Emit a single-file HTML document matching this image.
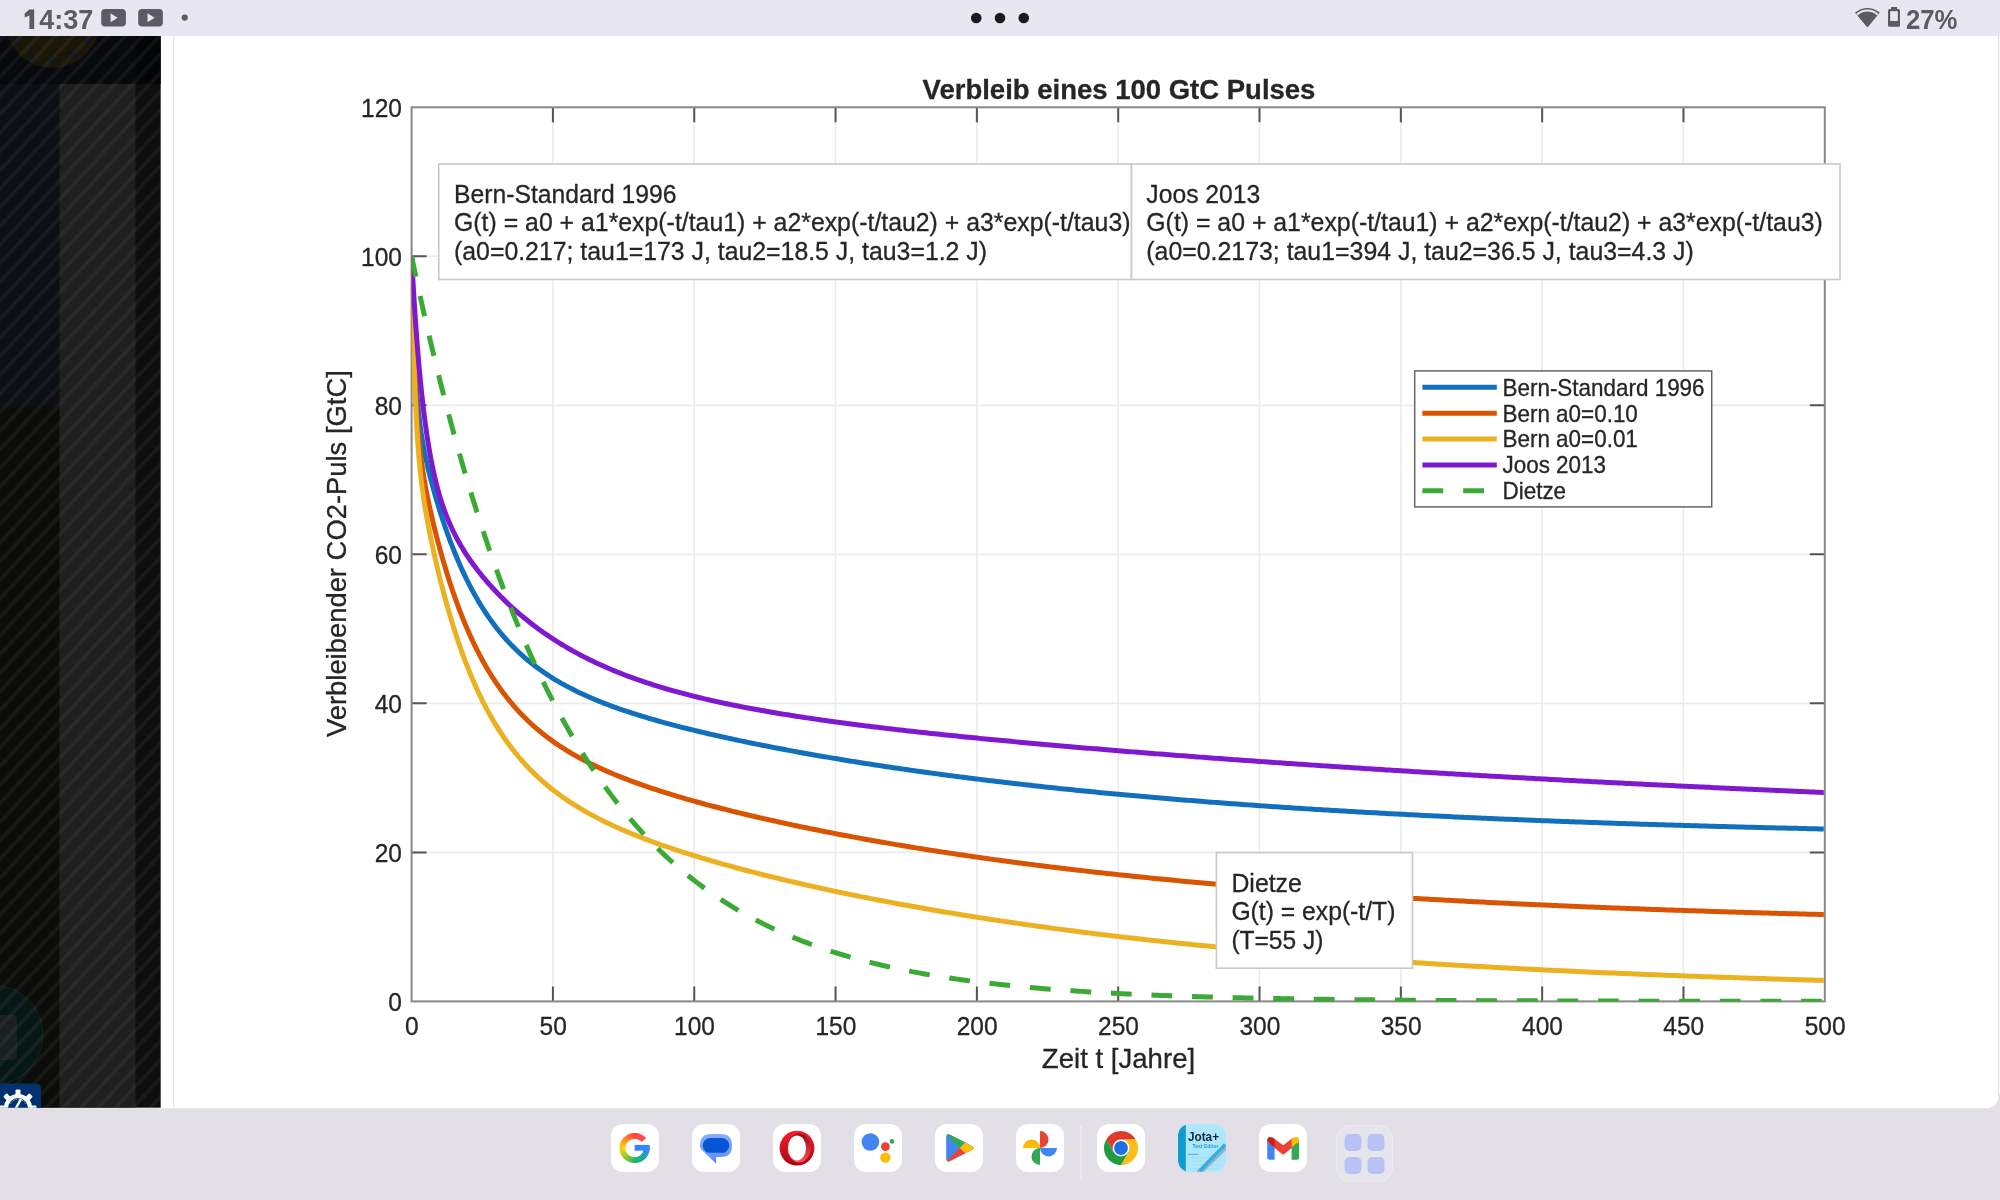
<!DOCTYPE html>
<html><head><meta charset="utf-8"><style>
html,body{margin:0;padding:0;width:2000px;height:1200px;overflow:hidden;background:#fff}
svg{display:block;font-family:"Liberation Sans", sans-serif;will-change:transform}
</style></head><body>
<svg width="2000" height="1200" viewBox="0 0 2000 1200">
<rect x="0" y="0" width="2000" height="1200" fill="#ffffff"/>
<rect x="0" y="0" width="2000" height="36" fill="#e8e6f0"/>
<rect x="0" y="1108.2" width="2000" height="91.8" fill="#e2e0e6"/>
<path d="M1985,1108.2 Q1998.6,1108.2 1998.6,1094.6 H2000 V1108.2Z" fill="#e2e0e6"/>
<rect x="1998" y="36" width="1.2" height="1060" fill="#e0e0e0"/>
<rect x="173" y="36" width="1" height="1071.7" fill="#e4e4e4"/>
<defs><pattern id="stripes" patternUnits="userSpaceOnUse" width="12.7" height="12.7" patternTransform="rotate(43)"><rect x="0" y="0" width="3.6" height="12.7" fill="#ffffff" fill-opacity="0.05"/></pattern></defs>
<rect x="0" y="36" width="160.7" height="1071.7" fill="#0e0e0e"/>
<rect x="0" y="84" width="59.5" height="322" fill="#0c1014"/>
<rect x="0" y="406" width="59.5" height="701.5" fill="#0c0c08"/>
<rect x="59.5" y="84" width="76" height="1023.5" fill="#1f1f1f"/>
<rect x="0" y="36" width="135.5" height="48" fill="#07090d"/>
<rect x="135.5" y="36" width="25.2" height="48" fill="#040506"/>
<clipPath id="lp"><rect x="0" y="36" width="160.7" height="1071.7"/></clipPath>
<g clip-path="url(#lp)">
<circle cx="52.5" cy="20.3" r="47.5" fill="#1a1709"/>
<polygon points="15.70,34.70 17.06,38.33 20.93,38.50 17.90,40.91 18.93,44.65 15.70,42.51 12.47,44.65 13.50,40.91 10.47,38.50 14.34,38.33" fill="#0d1220"/>
<polygon points="31.00,49.20 32.36,52.83 36.23,53.00 33.20,55.41 34.23,59.15 31.00,57.01 27.77,59.15 28.80,55.41 25.77,53.00 29.64,52.83" fill="#0d1220"/>
<polygon points="51.90,54.70 53.26,58.33 57.13,58.50 54.10,60.91 55.13,64.65 51.90,62.51 48.67,64.65 49.70,60.91 46.67,58.50 50.54,58.33" fill="#0d1220"/>
<polygon points="72.70,49.20 74.06,52.83 77.93,53.00 74.90,55.41 75.93,59.15 72.70,57.01 69.47,59.15 70.50,55.41 67.47,53.00 71.34,52.83" fill="#0d1220"/>
<polygon points="88.00,34.70 89.36,38.33 93.23,38.50 90.20,40.91 91.23,44.65 88.00,42.51 84.77,44.65 85.80,40.91 82.77,38.50 86.64,38.33" fill="#0d1220"/>
<circle cx="-7" cy="1035" r="50" fill="#061816" stroke="#1a2220" stroke-width="1"/>
<rect x="-10" y="1015" width="27" height="45" rx="4" fill="#1a1f1f"/>
<rect x="0" y="36" width="160.7" height="1071.7" fill="url(#stripes)"/>
<rect x="-10" y="1083.5" width="51" height="40" rx="5" fill="#003270"/>
<rect x="15.5" y="1089.5" width="5" height="6" rx="1" fill="#fff" transform="rotate(0 18 1108)"/><rect x="15.5" y="1089.5" width="5" height="6" rx="1" fill="#fff" transform="rotate(45 18 1108)"/><rect x="15.5" y="1089.5" width="5" height="6" rx="1" fill="#fff" transform="rotate(90 18 1108)"/><rect x="15.5" y="1089.5" width="5" height="6" rx="1" fill="#fff" transform="rotate(135 18 1108)"/><rect x="15.5" y="1089.5" width="5" height="6" rx="1" fill="#fff" transform="rotate(180 18 1108)"/><rect x="15.5" y="1089.5" width="5" height="6" rx="1" fill="#fff" transform="rotate(225 18 1108)"/><rect x="15.5" y="1089.5" width="5" height="6" rx="1" fill="#fff" transform="rotate(270 18 1108)"/><rect x="15.5" y="1089.5" width="5" height="6" rx="1" fill="#fff" transform="rotate(315 18 1108)"/>
<circle cx="18" cy="1108" r="14" fill="#fff"/>
<circle cx="18" cy="1108" r="10" fill="#003270"/>
<path d="M10,1104 A9,9 0 0 1 26,1104" stroke="#fff" stroke-width="0.8" fill="none" stroke-dasharray="1 1"/>
<path d="M16,1108 L21,1099" stroke="#fff" stroke-width="2.5"/>
</g>
<path d="M29.4,9.5 H34.2 V29 H29.4 V15.6 L24.7,17.6 V13.2 Z" fill="#5c5b63"/><text x="39.2" y="29" font-size="27.5" font-weight="bold" fill="#5c5b63" textLength="54.2" lengthAdjust="spacingAndGlyphs">4:37</text>
<rect x="101.2" y="9" width="24.7" height="17.6" rx="4" fill="#5c5b63"/>
<path d="M110.55,13.3L117.55,17.8L110.55,22.3Z" fill="#e8e6f0"/>
<rect x="138.2" y="9" width="24.7" height="17.6" rx="4" fill="#5c5b63"/>
<path d="M147.54999999999998,13.3L154.54999999999998,17.8L147.54999999999998,22.3Z" fill="#e8e6f0"/>
<circle cx="184.7" cy="17.6" r="3.1" fill="#5c5b63"/>
<circle cx="976.25" cy="18" r="5.3" fill="#1a1a1a"/>
<circle cx="1000" cy="18" r="5.3" fill="#1a1a1a"/>
<circle cx="1023.75" cy="18" r="5.3" fill="#1a1a1a"/>
<path d="M1867.4,27.0 L1855.57,12.65 A18.6,18.6 0 0 1 1879.23,12.65 Z" fill="#5c5b63" stroke="#5c5b63" stroke-width="1" stroke-linejoin="round"/>
<path d="M1856.24,13.69 A16.6,16.6 0 0 1 1878.56,13.69 L1877.16,15.39 A14.4,14.4 0 0 0 1857.64,15.39 Z" fill="#e8e6f0"/>
<rect x="1891" y="7" width="6" height="2.5" fill="#5c5b63"/>
<rect x="1888" y="9" width="12" height="17.8" rx="1.5" fill="#5c5b63"/>
<rect x="1890.2" y="11.2" width="7.6" height="9.8" fill="#e8e6f0"/>
<text x="1906" y="28.8" font-size="27" font-weight="bold" fill="#5c5b63" textLength="51.5" lengthAdjust="spacingAndGlyphs">27%</text>
<path d="M552.92,107.30V1001.40 M694.24,107.30V1001.40 M835.56,107.30V1001.40 M976.88,107.30V1001.40 M1118.20,107.30V1001.40 M1259.52,107.30V1001.40 M1400.84,107.30V1001.40 M1542.16,107.30V1001.40 M1683.48,107.30V1001.40 M411.60,852.38H1824.80 M411.60,703.37H1824.80 M411.60,554.35H1824.80 M411.60,405.33H1824.80 M411.60,256.32H1824.80" stroke="#ebebeb" stroke-width="1.6" fill="none"/>
<path d="M552.92,1001.40v-15 M552.92,107.30v15 M694.24,1001.40v-15 M694.24,107.30v15 M835.56,1001.40v-15 M835.56,107.30v15 M976.88,1001.40v-15 M976.88,107.30v15 M1118.20,1001.40v-15 M1118.20,107.30v15 M1259.52,1001.40v-15 M1259.52,107.30v15 M1400.84,1001.40v-15 M1400.84,107.30v15 M1542.16,1001.40v-15 M1542.16,107.30v15 M1683.48,1001.40v-15 M1683.48,107.30v15 M411.60,852.38h15 M1824.80,852.38h-15 M411.60,703.37h15 M1824.80,703.37h-15 M411.60,554.35h15 M1824.80,554.35h-15 M411.60,405.33h15 M1824.80,405.33h-15 M411.60,256.32h15 M1824.80,256.32h-15" stroke="#555" stroke-width="2" fill="none"/>
<rect x="411.6" y="107.3" width="1413.20" height="894.10" fill="none" stroke="#888" stroke-width="2"/>
<clipPath id="pc"><rect x="411.6" y="107.3" width="1412.20" height="894.10"/></clipPath>
<g clip-path="url(#pc)" fill="none" stroke-width="5" stroke-linejoin="round">
<path d="M411.60,256.32 L411.74,262.77 L411.88,268.99 L412.02,274.98 L412.17,280.75 L412.31,286.31 L412.45,291.67 L412.59,296.84 L412.73,301.82 L412.87,306.62 L413.01,311.26 L413.15,315.73 L413.30,320.04 L413.44,324.20 L413.58,328.22 L413.72,332.10 L413.86,335.85 L414.00,339.47 L414.14,342.97 L414.29,346.35 L414.43,349.62 L414.57,352.78 L414.71,355.84 L414.85,358.80 L414.99,361.66 L415.13,364.43 L415.27,367.12 L415.42,369.72 L415.56,372.24 L415.70,374.68 L415.84,377.05 L415.98,379.35 L416.12,381.57 L416.26,383.74 L416.40,385.84 L416.55,387.88 L416.83,391.78 L417.11,395.48 L417.39,398.97 L417.68,402.29 L417.96,405.43 L418.24,408.43 L418.52,411.28 L418.81,414.00 L419.09,416.59 L419.37,419.08 L419.66,421.46 L419.94,423.75 L420.22,425.95 L420.50,428.06 L420.79,430.10 L421.21,433.04 L421.63,435.83 L422.06,438.49 L422.48,441.05 L422.91,443.51 L423.33,445.87 L423.75,448.16 L424.18,450.37 L424.60,452.52 L425.03,454.61 L425.45,456.64 L425.87,458.63 L426.44,461.21 L427.00,463.72 L427.57,466.17 L428.13,468.56 L428.70,470.91 L429.27,473.21 L429.83,475.46 L430.40,477.68 L430.96,479.87 L431.53,482.02 L432.09,484.14 L432.66,486.23 L433.22,488.29 L433.79,490.33 L434.35,492.34 L434.92,494.33 L435.48,496.30 L436.05,498.24 L436.61,500.16 L437.32,502.54 L438.03,504.88 L438.73,507.19 L439.44,509.48 L441.28,515.28 L442.69,519.62 L444.10,523.85 L445.52,527.98 L446.93,532.01 L448.34,535.95 L449.76,539.79 L451.17,543.54 L452.58,547.21 L454.00,550.79 L455.41,554.28 L456.82,557.70 L458.24,561.03 L459.65,564.29 L461.06,567.47 L462.48,570.59 L463.89,573.63 L465.30,576.60 L466.71,579.50 L468.13,582.34 L469.54,585.11 L470.95,587.83 L472.37,590.48 L473.78,593.07 L475.19,595.61 L476.61,598.09 L478.02,600.51 L479.43,602.88 L480.85,605.20 L482.26,607.47 L483.67,609.69 L485.09,611.87 L486.50,614.00 L487.91,616.08 L489.33,618.11 L490.74,620.11 L492.15,622.06 L493.57,623.97 L494.98,625.85 L496.39,627.68 L497.81,629.47 L499.22,631.23 L500.63,632.96 L502.04,634.64 L503.46,636.30 L504.87,637.92 L506.28,639.51 L507.70,641.07 L509.11,642.59 L510.52,644.09 L511.94,645.56 L513.35,647.00 L516.18,649.80 L519.00,652.49 L521.83,655.08 L524.66,657.58 L527.48,659.99 L530.31,662.32 L533.14,664.56 L535.96,666.72 L538.79,668.82 L541.61,670.84 L544.44,672.79 L547.27,674.69 L550.09,676.52 L552.92,678.30 L555.75,680.02 L558.57,681.69 L561.40,683.31 L564.23,684.89 L567.05,686.42 L569.88,687.91 L572.70,689.35 L575.53,690.76 L578.36,692.14 L581.18,693.47 L584.01,694.78 L586.84,696.05 L589.66,697.29 L592.49,698.51 L595.32,699.69 L598.14,700.85 L600.97,701.99 L603.80,703.10 L606.62,704.18 L609.45,705.25 L612.27,706.29 L615.10,707.32 L617.93,708.32 L620.75,709.31 L623.58,710.28 L626.41,711.23 L629.23,712.16 L632.06,713.08 L634.89,713.99 L637.71,714.88 L640.54,715.76 L643.36,716.62 L646.19,717.47 L649.02,718.31 L651.84,719.13 L654.67,719.95 L657.50,720.75 L660.32,721.55 L663.15,722.33 L665.98,723.10 L668.80,723.87 L671.63,724.62 L674.46,725.37 L677.28,726.10 L680.11,726.83 L682.93,727.55 L685.76,728.26 L688.59,728.97 L691.41,729.67 L694.24,730.36 L697.07,731.04 L699.89,731.72 L702.72,732.39 L705.55,733.05 L708.37,733.71 L711.20,734.36 L714.02,735.01 L716.85,735.65 L719.68,736.28 L722.50,736.91 L725.33,737.54 L728.16,738.16 L730.98,738.77 L733.81,739.38 L736.64,739.98 L739.46,740.58 L742.29,741.17 L745.12,741.76 L747.94,742.35 L750.77,742.93 L753.59,743.51 L756.42,744.08 L759.25,744.65 L762.07,745.21 L764.90,745.77 L767.73,746.32 L770.55,746.88 L773.38,747.42 L776.21,747.97 L779.03,748.51 L781.86,749.04 L784.68,749.58 L787.51,750.11 L790.34,750.63 L793.16,751.15 L795.99,751.67 L798.82,752.19 L801.64,752.70 L804.47,753.21 L807.30,753.71 L810.12,754.22 L812.95,754.72 L815.78,755.21 L818.60,755.70 L821.43,756.19 L824.25,756.68 L827.08,757.16 L829.91,757.64 L832.73,758.12 L835.56,758.59 L838.39,759.07 L841.21,759.53 L844.04,760.00 L846.87,760.46 L849.69,760.92 L852.52,761.38 L855.34,761.83 L858.17,762.29 L861.00,762.73 L863.82,763.18 L866.65,763.62 L869.48,764.07 L872.30,764.50 L875.13,764.94 L877.96,765.37 L880.78,765.80 L883.61,766.23 L886.44,766.66 L889.26,767.08 L892.09,767.50 L894.91,767.92 L897.74,768.33 L900.57,768.74 L903.39,769.15 L906.22,769.56 L909.05,769.97 L911.87,770.37 L914.70,770.77 L917.53,771.17 L920.35,771.57 L923.18,771.96 L926.00,772.35 L928.83,772.74 L931.66,773.13 L934.48,773.51 L937.31,773.89 L940.14,774.27 L942.96,774.65 L945.79,775.03 L948.62,775.40 L951.44,775.77 L954.27,776.14 L957.10,776.51 L959.92,776.87 L962.75,777.24 L965.57,777.60 L968.40,777.96 L971.23,778.31 L974.05,778.67 L976.88,779.02 L979.71,779.37 L982.53,779.72 L985.36,780.06 L988.19,780.41 L991.01,780.75 L993.84,781.09 L996.66,781.43 L999.49,781.76 L1002.32,782.10 L1005.14,782.43 L1007.97,782.76 L1010.80,783.09 L1013.62,783.42 L1016.45,783.74 L1019.28,784.07 L1022.10,784.39 L1024.93,784.71 L1027.76,785.02 L1030.58,785.34 L1033.41,785.65 L1036.23,785.96 L1039.06,786.27 L1041.89,786.58 L1044.71,786.89 L1047.54,787.19 L1050.37,787.50 L1053.19,787.80 L1056.02,788.10 L1058.85,788.39 L1061.67,788.69 L1064.50,788.98 L1067.32,789.28 L1070.15,789.57 L1072.98,789.86 L1075.80,790.15 L1078.63,790.43 L1081.46,790.72 L1084.28,791.00 L1087.11,791.28 L1089.94,791.56 L1092.76,791.84 L1095.59,792.11 L1098.42,792.39 L1101.24,792.66 L1104.07,792.93 L1106.89,793.20 L1109.72,793.47 L1112.55,793.74 L1115.37,794.00 L1118.20,794.27 L1121.03,794.53 L1123.85,794.79 L1126.68,795.05 L1129.51,795.30 L1132.33,795.56 L1135.16,795.82 L1137.98,796.07 L1140.81,796.32 L1143.64,796.57 L1146.46,796.82 L1149.29,797.07 L1152.12,797.31 L1154.94,797.56 L1157.77,797.80 L1160.60,798.04 L1163.42,798.28 L1166.25,798.52 L1169.08,798.76 L1171.90,799.00 L1174.73,799.23 L1177.55,799.46 L1180.38,799.70 L1183.21,799.93 L1186.03,800.16 L1188.86,800.38 L1191.69,800.61 L1194.51,800.84 L1197.34,801.06 L1200.17,801.28 L1202.99,801.51 L1205.82,801.73 L1208.64,801.94 L1211.47,802.16 L1214.30,802.38 L1217.12,802.59 L1219.95,802.81 L1222.78,803.02 L1225.60,803.23 L1228.43,803.44 L1231.26,803.65 L1234.08,803.86 L1236.91,804.07 L1239.74,804.27 L1242.56,804.48 L1245.39,804.68 L1248.21,804.88 L1251.04,805.08 L1253.87,805.28 L1256.69,805.48 L1259.52,805.68 L1262.35,805.88 L1265.17,806.07 L1268.00,806.26 L1270.83,806.46 L1273.65,806.65 L1276.48,806.84 L1279.30,807.03 L1282.13,807.22 L1284.96,807.41 L1287.78,807.59 L1290.61,807.78 L1293.44,807.96 L1296.26,808.14 L1299.09,808.33 L1301.92,808.51 L1304.74,808.69 L1307.57,808.87 L1310.40,809.04 L1313.22,809.22 L1316.05,809.40 L1318.87,809.57 L1321.70,809.75 L1324.53,809.92 L1327.35,810.09 L1330.18,810.26 L1333.01,810.43 L1335.83,810.60 L1338.66,810.77 L1341.49,810.94 L1344.31,811.10 L1347.14,811.27 L1349.96,811.43 L1352.79,811.59 L1355.62,811.76 L1358.44,811.92 L1361.27,812.08 L1364.10,812.24 L1366.92,812.40 L1369.75,812.55 L1372.58,812.71 L1375.40,812.87 L1378.23,813.02 L1381.06,813.17 L1383.88,813.33 L1386.71,813.48 L1389.53,813.63 L1392.36,813.78 L1395.19,813.93 L1398.01,814.08 L1400.84,814.23 L1403.67,814.37 L1406.49,814.52 L1409.32,814.67 L1412.15,814.81 L1414.97,814.95 L1417.80,815.10 L1420.62,815.24 L1423.45,815.38 L1426.28,815.52 L1429.10,815.66 L1431.93,815.80 L1434.76,815.94 L1437.58,816.07 L1440.41,816.21 L1443.24,816.35 L1446.06,816.48 L1448.89,816.61 L1451.72,816.75 L1454.54,816.88 L1457.37,817.01 L1460.19,817.14 L1463.02,817.27 L1465.85,817.40 L1468.67,817.53 L1471.50,817.66 L1474.33,817.79 L1477.15,817.91 L1479.98,818.04 L1482.81,818.16 L1485.63,818.29 L1488.46,818.41 L1491.28,818.53 L1494.11,818.66 L1496.94,818.78 L1499.76,818.90 L1502.59,819.02 L1505.42,819.14 L1508.24,819.26 L1511.07,819.37 L1513.90,819.49 L1516.72,819.61 L1519.55,819.72 L1522.38,819.84 L1525.20,819.95 L1528.03,820.07 L1530.85,820.18 L1533.68,820.29 L1536.51,820.41 L1539.33,820.52 L1542.16,820.63 L1544.99,820.74 L1547.81,820.85 L1550.64,820.96 L1553.47,821.06 L1556.29,821.17 L1559.12,821.28 L1561.94,821.39 L1564.77,821.49 L1567.60,821.60 L1570.42,821.70 L1573.25,821.80 L1576.08,821.91 L1578.90,822.01 L1581.73,822.11 L1584.56,822.21 L1587.38,822.32 L1590.21,822.42 L1593.04,822.52 L1595.86,822.61 L1598.69,822.71 L1601.51,822.81 L1604.34,822.91 L1607.17,823.01 L1609.99,823.10 L1612.82,823.20 L1615.65,823.29 L1618.47,823.39 L1621.30,823.48 L1624.13,823.58 L1626.95,823.67 L1629.78,823.76 L1632.60,823.85 L1635.43,823.94 L1638.26,824.04 L1641.08,824.13 L1643.91,824.22 L1646.74,824.31 L1649.56,824.39 L1652.39,824.48 L1655.22,824.57 L1658.04,824.66 L1660.87,824.74 L1663.70,824.83 L1666.52,824.92 L1669.35,825.00 L1672.17,825.09 L1675.00,825.17 L1677.83,825.26 L1680.65,825.34 L1683.48,825.42 L1686.31,825.50 L1689.13,825.59 L1691.96,825.67 L1694.79,825.75 L1697.61,825.83 L1700.44,825.91 L1703.26,825.99 L1706.09,826.07 L1708.92,826.15 L1711.74,826.23 L1714.57,826.30 L1717.40,826.38 L1720.22,826.46 L1723.05,826.53 L1725.88,826.61 L1728.70,826.69 L1731.53,826.76 L1734.36,826.84 L1737.18,826.91 L1740.01,826.98 L1742.83,827.06 L1745.66,827.13 L1748.49,827.20 L1751.31,827.27 L1754.14,827.35 L1756.97,827.42 L1759.79,827.49 L1762.62,827.56 L1765.45,827.63 L1768.27,827.70 L1771.10,827.77 L1773.92,827.84 L1776.75,827.91 L1779.58,827.97 L1782.40,828.04 L1785.23,828.11 L1788.06,828.18 L1790.88,828.24 L1793.71,828.31 L1796.54,828.37 L1799.36,828.44 L1802.19,828.50 L1805.02,828.57 L1807.84,828.63 L1810.67,828.70 L1813.49,828.76 L1816.32,828.82 L1819.15,828.89 L1821.97,828.95 L1824.80,829.01" stroke="#1170bd"/>
<path d="M411.60,256.32 L411.74,263.74 L411.88,270.89 L412.02,277.77 L412.17,284.40 L412.31,290.80 L412.45,296.96 L412.59,302.89 L412.73,308.62 L412.87,314.14 L413.01,319.47 L413.15,324.61 L413.30,329.56 L413.44,334.35 L413.58,338.97 L413.72,343.43 L413.86,347.74 L414.00,351.90 L414.14,355.92 L414.29,359.80 L414.43,363.56 L414.57,367.20 L414.71,370.71 L414.85,374.11 L414.99,377.40 L415.13,380.59 L415.27,383.67 L415.42,386.66 L415.56,389.56 L415.70,392.37 L415.84,395.09 L415.98,397.73 L416.12,400.29 L416.26,402.78 L416.40,405.19 L416.55,407.53 L416.69,409.81 L416.83,412.03 L416.97,414.18 L417.11,416.27 L417.25,418.31 L417.54,422.22 L417.82,425.93 L418.10,429.46 L418.38,432.81 L418.67,436.01 L418.95,439.07 L419.23,441.99 L419.51,444.78 L419.80,447.47 L420.08,450.04 L420.36,452.52 L420.64,454.91 L420.93,457.21 L421.21,459.44 L421.49,461.60 L421.78,463.69 L422.06,465.72 L422.48,468.65 L422.91,471.48 L423.33,474.20 L423.75,476.82 L424.18,479.37 L424.60,481.83 L425.03,484.24 L425.45,486.58 L425.87,488.86 L426.30,491.09 L426.72,493.28 L427.15,495.42 L427.57,497.53 L427.99,499.60 L428.42,501.63 L428.84,503.64 L429.27,505.62 L429.83,508.21 L430.40,510.76 L430.96,513.27 L431.53,515.74 L432.09,518.18 L432.66,520.58 L433.22,522.95 L433.79,525.29 L434.35,527.61 L434.92,529.89 L435.48,532.16 L436.05,534.39 L436.61,536.60 L437.18,538.79 L437.74,540.95 L438.31,543.09 L438.87,545.21 L439.44,547.31 L441.28,553.98 L442.69,558.96 L444.10,563.82 L445.52,568.57 L446.93,573.21 L448.34,577.73 L449.76,582.15 L451.17,586.46 L452.58,590.67 L454.00,594.79 L455.41,598.80 L456.82,602.73 L458.24,606.56 L459.65,610.31 L461.06,613.97 L462.48,617.55 L463.89,621.04 L465.30,624.46 L466.71,627.79 L468.13,631.06 L469.54,634.24 L470.95,637.36 L472.37,640.41 L473.78,643.39 L475.19,646.30 L476.61,649.16 L478.02,651.94 L479.43,654.67 L480.85,657.34 L482.26,659.95 L483.67,662.50 L485.09,665.00 L486.50,667.44 L487.91,669.83 L489.33,672.18 L490.74,674.47 L492.15,676.71 L493.57,678.91 L494.98,681.06 L496.39,683.17 L497.81,685.23 L499.22,687.26 L500.63,689.24 L502.04,691.18 L503.46,693.08 L504.87,694.94 L506.28,696.77 L507.70,698.56 L509.11,700.31 L510.52,702.04 L511.94,703.72 L513.35,705.38 L514.76,707.00 L516.18,708.59 L517.59,710.16 L519.00,711.69 L520.42,713.19 L521.83,714.67 L523.24,716.12 L524.66,717.54 L527.48,720.31 L530.31,722.98 L533.14,725.56 L535.96,728.05 L538.79,730.45 L541.61,732.78 L544.44,735.03 L547.27,737.20 L550.09,739.31 L552.92,741.35 L555.75,743.33 L558.57,745.25 L561.40,747.12 L564.23,748.93 L567.05,750.69 L569.88,752.40 L572.70,754.06 L575.53,755.68 L578.36,757.26 L581.18,758.80 L584.01,760.30 L586.84,761.76 L589.66,763.19 L592.49,764.58 L595.32,765.95 L598.14,767.28 L600.97,768.58 L603.80,769.86 L606.62,771.11 L609.45,772.33 L612.27,773.53 L615.10,774.71 L617.93,775.86 L620.75,777.00 L623.58,778.11 L626.41,779.20 L629.23,780.28 L632.06,781.34 L634.89,782.38 L637.71,783.40 L640.54,784.41 L643.36,785.40 L646.19,786.38 L649.02,787.34 L651.84,788.29 L654.67,789.23 L657.50,790.15 L660.32,791.06 L663.15,791.96 L665.98,792.85 L668.80,793.73 L671.63,794.60 L674.46,795.45 L677.28,796.30 L680.11,797.14 L682.93,797.97 L685.76,798.79 L688.59,799.60 L691.41,800.40 L694.24,801.19 L697.07,801.98 L699.89,802.76 L702.72,803.53 L705.55,804.29 L708.37,805.05 L711.20,805.80 L714.02,806.54 L716.85,807.27 L719.68,808.00 L722.50,808.73 L725.33,809.44 L728.16,810.16 L730.98,810.86 L733.81,811.56 L736.64,812.25 L739.46,812.94 L742.29,813.62 L745.12,814.30 L747.94,814.97 L750.77,815.64 L753.59,816.30 L756.42,816.96 L759.25,817.61 L762.07,818.26 L764.90,818.91 L767.73,819.54 L770.55,820.18 L773.38,820.81 L776.21,821.43 L779.03,822.05 L781.86,822.67 L784.68,823.28 L787.51,823.89 L790.34,824.50 L793.16,825.10 L795.99,825.69 L798.82,826.28 L801.64,826.87 L804.47,827.46 L807.30,828.04 L810.12,828.62 L812.95,829.19 L815.78,829.76 L818.60,830.32 L821.43,830.89 L824.25,831.45 L827.08,832.00 L829.91,832.55 L832.73,833.10 L835.56,833.65 L838.39,834.19 L841.21,834.73 L844.04,835.26 L846.87,835.80 L849.69,836.32 L852.52,836.85 L855.34,837.37 L858.17,837.89 L861.00,838.41 L863.82,838.92 L866.65,839.43 L869.48,839.94 L872.30,840.44 L875.13,840.94 L877.96,841.44 L880.78,841.93 L883.61,842.42 L886.44,842.91 L889.26,843.40 L892.09,843.88 L894.91,844.36 L897.74,844.84 L900.57,845.31 L903.39,845.79 L906.22,846.25 L909.05,846.72 L911.87,847.18 L914.70,847.64 L917.53,848.10 L920.35,848.56 L923.18,849.01 L926.00,849.46 L928.83,849.91 L931.66,850.35 L934.48,850.79 L937.31,851.23 L940.14,851.67 L942.96,852.10 L945.79,852.54 L948.62,852.97 L951.44,853.39 L954.27,853.82 L957.10,854.24 L959.92,854.66 L962.75,855.07 L965.57,855.49 L968.40,855.90 L971.23,856.31 L974.05,856.72 L976.88,857.12 L979.71,857.53 L982.53,857.93 L985.36,858.32 L988.19,858.72 L991.01,859.11 L993.84,859.50 L996.66,859.89 L999.49,860.28 L1002.32,860.66 L1005.14,861.05 L1007.97,861.43 L1010.80,861.80 L1013.62,862.18 L1016.45,862.55 L1019.28,862.92 L1022.10,863.29 L1024.93,863.66 L1027.76,864.02 L1030.58,864.39 L1033.41,864.75 L1036.23,865.11 L1039.06,865.46 L1041.89,865.82 L1044.71,866.17 L1047.54,866.52 L1050.37,866.87 L1053.19,867.21 L1056.02,867.56 L1058.85,867.90 L1061.67,868.24 L1064.50,868.58 L1067.32,868.92 L1070.15,869.25 L1072.98,869.58 L1075.80,869.91 L1078.63,870.24 L1081.46,870.57 L1084.28,870.89 L1087.11,871.22 L1089.94,871.54 L1092.76,871.86 L1095.59,872.17 L1098.42,872.49 L1101.24,872.80 L1104.07,873.12 L1106.89,873.43 L1109.72,873.73 L1112.55,874.04 L1115.37,874.35 L1118.20,874.65 L1121.03,874.95 L1123.85,875.25 L1126.68,875.55 L1129.51,875.84 L1132.33,876.14 L1135.16,876.43 L1137.98,876.72 L1140.81,877.01 L1143.64,877.30 L1146.46,877.58 L1149.29,877.87 L1152.12,878.15 L1154.94,878.43 L1157.77,878.71 L1160.60,878.99 L1163.42,879.27 L1166.25,879.54 L1169.08,879.81 L1171.90,880.09 L1174.73,880.36 L1177.55,880.62 L1180.38,880.89 L1183.21,881.16 L1186.03,881.42 L1188.86,881.68 L1191.69,881.94 L1194.51,882.20 L1197.34,882.46 L1200.17,882.72 L1202.99,882.97 L1205.82,883.22 L1208.64,883.48 L1211.47,883.73 L1214.30,883.97 L1217.12,884.22 L1219.95,884.47 L1222.78,884.71 L1225.60,884.96 L1228.43,885.20 L1231.26,885.44 L1234.08,885.68 L1236.91,885.92 L1239.74,886.15 L1242.56,886.39 L1245.39,886.62 L1248.21,886.85 L1251.04,887.08 L1253.87,887.31 L1256.69,887.54 L1259.52,887.77 L1262.35,887.99 L1265.17,888.22 L1268.00,888.44 L1270.83,888.66 L1273.65,888.88 L1276.48,889.10 L1279.30,889.32 L1282.13,889.54 L1284.96,889.75 L1287.78,889.97 L1290.61,890.18 L1293.44,890.39 L1296.26,890.60 L1299.09,890.81 L1301.92,891.02 L1304.74,891.23 L1307.57,891.43 L1310.40,891.64 L1313.22,891.84 L1316.05,892.04 L1318.87,892.24 L1321.70,892.44 L1324.53,892.64 L1327.35,892.84 L1330.18,893.04 L1333.01,893.23 L1335.83,893.42 L1338.66,893.62 L1341.49,893.81 L1344.31,894.00 L1347.14,894.19 L1349.96,894.38 L1352.79,894.57 L1355.62,894.75 L1358.44,894.94 L1361.27,895.12 L1364.10,895.31 L1366.92,895.49 L1369.75,895.67 L1372.58,895.85 L1375.40,896.03 L1378.23,896.21 L1381.06,896.38 L1383.88,896.56 L1386.71,896.73 L1389.53,896.91 L1392.36,897.08 L1395.19,897.25 L1398.01,897.42 L1400.84,897.59 L1403.67,897.76 L1406.49,897.93 L1409.32,898.10 L1412.15,898.26 L1414.97,898.43 L1417.80,898.59 L1420.62,898.76 L1423.45,898.92 L1426.28,899.08 L1429.10,899.24 L1431.93,899.40 L1434.76,899.56 L1437.58,899.72 L1440.41,899.87 L1443.24,900.03 L1446.06,900.18 L1448.89,900.34 L1451.72,900.49 L1454.54,900.64 L1457.37,900.79 L1460.19,900.94 L1463.02,901.09 L1465.85,901.24 L1468.67,901.39 L1471.50,901.54 L1474.33,901.68 L1477.15,901.83 L1479.98,901.97 L1482.81,902.12 L1485.63,902.26 L1488.46,902.40 L1491.28,902.54 L1494.11,902.68 L1496.94,902.82 L1499.76,902.96 L1502.59,903.10 L1505.42,903.24 L1508.24,903.37 L1511.07,903.51 L1513.90,903.64 L1516.72,903.78 L1519.55,903.91 L1522.38,904.04 L1525.20,904.18 L1528.03,904.31 L1530.85,904.44 L1533.68,904.57 L1536.51,904.70 L1539.33,904.82 L1542.16,904.95 L1544.99,905.08 L1547.81,905.20 L1550.64,905.33 L1553.47,905.45 L1556.29,905.58 L1559.12,905.70 L1561.94,905.82 L1564.77,905.94 L1567.60,906.06 L1570.42,906.18 L1573.25,906.30 L1576.08,906.42 L1578.90,906.54 L1581.73,906.66 L1584.56,906.77 L1587.38,906.89 L1590.21,907.01 L1593.04,907.12 L1595.86,907.23 L1598.69,907.35 L1601.51,907.46 L1604.34,907.57 L1607.17,907.68 L1609.99,907.79 L1612.82,907.90 L1615.65,908.01 L1618.47,908.12 L1621.30,908.23 L1624.13,908.34 L1626.95,908.45 L1629.78,908.55 L1632.60,908.66 L1635.43,908.76 L1638.26,908.87 L1641.08,908.97 L1643.91,909.07 L1646.74,909.18 L1649.56,909.28 L1652.39,909.38 L1655.22,909.48 L1658.04,909.58 L1660.87,909.68 L1663.70,909.78 L1666.52,909.88 L1669.35,909.98 L1672.17,910.08 L1675.00,910.17 L1677.83,910.27 L1680.65,910.37 L1683.48,910.46 L1686.31,910.56 L1689.13,910.65 L1691.96,910.74 L1694.79,910.84 L1697.61,910.93 L1700.44,911.02 L1703.26,911.11 L1706.09,911.20 L1708.92,911.29 L1711.74,911.38 L1714.57,911.47 L1717.40,911.56 L1720.22,911.65 L1723.05,911.74 L1725.88,911.83 L1728.70,911.91 L1731.53,912.00 L1734.36,912.09 L1737.18,912.17 L1740.01,912.26 L1742.83,912.34 L1745.66,912.42 L1748.49,912.51 L1751.31,912.59 L1754.14,912.67 L1756.97,912.75 L1759.79,912.84 L1762.62,912.92 L1765.45,913.00 L1768.27,913.08 L1771.10,913.16 L1773.92,913.24 L1776.75,913.32 L1779.58,913.39 L1782.40,913.47 L1785.23,913.55 L1788.06,913.63 L1790.88,913.70 L1793.71,913.78 L1796.54,913.85 L1799.36,913.93 L1802.19,914.00 L1805.02,914.08 L1807.84,914.15 L1810.67,914.23 L1813.49,914.30 L1816.32,914.37 L1819.15,914.44 L1821.97,914.52 L1824.80,914.59" stroke="#d95300"/>
<path d="M411.60,256.32 L411.74,264.48 L411.88,272.34 L412.02,279.92 L412.17,287.21 L412.31,294.24 L412.45,301.02 L412.59,307.55 L412.73,313.85 L412.87,319.92 L413.01,325.78 L413.15,331.43 L413.30,336.89 L413.44,342.15 L413.58,347.23 L413.72,352.14 L413.86,356.88 L414.00,361.46 L414.14,365.88 L414.29,370.15 L414.43,374.29 L414.57,378.28 L414.71,382.15 L414.85,385.89 L414.99,389.51 L415.13,393.02 L415.27,396.41 L415.42,399.70 L415.56,402.88 L415.70,405.97 L415.84,408.97 L415.98,411.87 L416.12,414.69 L416.26,417.42 L416.40,420.08 L416.55,422.66 L416.69,425.16 L416.83,427.60 L416.97,429.96 L417.11,432.27 L417.25,434.51 L417.39,436.69 L417.54,438.81 L417.68,440.88 L417.82,442.89 L418.10,446.77 L418.38,450.46 L418.67,453.98 L418.95,457.34 L419.23,460.55 L419.51,463.63 L419.80,466.58 L420.08,469.41 L420.36,472.14 L420.64,474.77 L420.93,477.30 L421.21,479.75 L421.49,482.13 L421.78,484.43 L422.06,486.66 L422.34,488.83 L422.62,490.94 L422.91,492.99 L423.19,495.00 L423.61,497.92 L424.04,500.75 L424.46,503.49 L424.88,506.16 L425.31,508.75 L425.73,511.28 L426.16,513.76 L426.58,516.18 L427.00,518.55 L427.43,520.88 L427.85,523.17 L428.28,525.42 L428.70,527.64 L429.12,529.82 L429.55,531.98 L429.97,534.10 L430.40,536.20 L430.82,538.28 L431.24,540.33 L431.67,542.36 L432.09,544.36 L432.52,546.35 L432.94,548.32 L433.50,550.91 L434.07,553.47 L434.64,556.00 L435.20,558.50 L435.77,560.97 L436.33,563.42 L436.90,565.83 L437.46,568.23 L438.03,570.59 L438.59,572.94 L439.16,575.25 L439.72,577.55 L441.28,583.74 L442.69,589.22 L444.10,594.58 L445.52,599.80 L446.93,604.90 L448.34,609.87 L449.76,614.73 L451.17,619.47 L452.58,624.11 L454.00,628.63 L455.41,633.05 L456.82,637.37 L458.24,641.59 L459.65,645.71 L461.06,649.73 L462.48,653.67 L463.89,657.51 L465.30,661.27 L466.71,664.94 L468.13,668.53 L469.54,672.04 L470.95,675.47 L472.37,678.82 L473.78,682.10 L475.19,685.30 L476.61,688.44 L478.02,691.51 L479.43,694.50 L480.85,697.44 L482.26,700.31 L483.67,703.12 L485.09,705.86 L486.50,708.55 L487.91,711.19 L489.33,713.76 L490.74,716.28 L492.15,718.75 L493.57,721.17 L494.98,723.54 L496.39,725.85 L497.81,728.13 L499.22,730.35 L500.63,732.53 L502.04,734.66 L503.46,736.75 L504.87,738.80 L506.28,740.81 L507.70,742.78 L509.11,744.71 L510.52,746.61 L511.94,748.46 L513.35,750.28 L514.76,752.07 L516.18,753.82 L517.59,755.54 L519.00,757.23 L520.42,758.88 L521.83,760.51 L523.24,762.10 L524.66,763.66 L526.07,765.20 L527.48,766.71 L528.90,768.19 L530.31,769.65 L531.72,771.08 L534.55,773.86 L537.37,776.56 L540.20,779.16 L543.03,781.67 L545.85,784.10 L548.68,786.46 L551.51,788.74 L554.33,790.95 L557.16,793.10 L559.99,795.18 L562.81,797.20 L565.64,799.16 L568.47,801.07 L571.29,802.93 L574.12,804.73 L576.94,806.49 L579.77,808.20 L582.60,809.88 L585.42,811.50 L588.25,813.09 L591.08,814.65 L593.90,816.16 L596.73,817.65 L599.56,819.10 L602.38,820.51 L605.21,821.90 L608.03,823.26 L610.86,824.60 L613.69,825.90 L616.51,827.19 L619.34,828.45 L622.17,829.68 L624.99,830.89 L627.82,832.09 L630.65,833.26 L633.47,834.41 L636.30,835.55 L639.13,836.66 L641.95,837.76 L644.78,838.85 L647.60,839.91 L650.43,840.97 L653.26,842.00 L656.08,843.03 L658.91,844.04 L661.74,845.03 L664.56,846.02 L667.39,846.99 L670.22,847.95 L673.04,848.90 L675.87,849.83 L678.69,850.76 L681.52,851.68 L684.35,852.58 L687.17,853.48 L690.00,854.37 L692.83,855.24 L695.65,856.11 L698.48,856.97 L701.31,857.83 L704.13,858.67 L706.96,859.51 L709.79,860.33 L712.61,861.15 L715.44,861.97 L718.26,862.77 L721.09,863.57 L723.92,864.36 L726.74,865.15 L729.57,865.93 L732.40,866.70 L735.22,867.47 L738.05,868.23 L740.88,868.98 L743.70,869.73 L746.53,870.47 L749.35,871.21 L752.18,871.94 L755.01,872.67 L757.83,873.39 L760.66,874.10 L763.49,874.81 L766.31,875.52 L769.14,876.22 L771.97,876.91 L774.79,877.60 L777.62,878.29 L780.45,878.97 L783.27,879.64 L786.10,880.31 L788.92,880.98 L791.75,881.64 L794.58,882.30 L797.40,882.96 L800.23,883.61 L803.06,884.25 L805.88,884.89 L808.71,885.53 L811.54,886.16 L814.36,886.79 L817.19,887.41 L820.01,888.04 L822.84,888.65 L825.67,889.27 L828.49,889.87 L831.32,890.48 L834.15,891.08 L836.97,891.68 L839.80,892.27 L842.63,892.86 L845.45,893.45 L848.28,894.03 L851.11,894.61 L853.93,895.19 L856.76,895.76 L859.58,896.33 L862.41,896.90 L865.24,897.46 L868.06,898.02 L870.89,898.58 L873.72,899.13 L876.54,899.68 L879.37,900.22 L882.20,900.76 L885.02,901.30 L887.85,901.84 L890.67,902.37 L893.50,902.90 L896.33,903.43 L899.15,903.95 L901.98,904.47 L904.81,904.99 L907.63,905.50 L910.46,906.02 L913.29,906.52 L916.11,907.03 L918.94,907.53 L921.77,908.03 L924.59,908.53 L927.42,909.02 L930.24,909.51 L933.07,910.00 L935.90,910.48 L938.72,910.97 L941.55,911.44 L944.38,911.92 L947.20,912.39 L950.03,912.87 L952.86,913.33 L955.68,913.80 L958.51,914.26 L961.33,914.72 L964.16,915.18 L966.99,915.63 L969.81,916.09 L972.64,916.54 L975.47,916.98 L978.29,917.43 L981.12,917.87 L983.95,918.31 L986.77,918.74 L989.60,919.18 L992.43,919.61 L995.25,920.04 L998.08,920.46 L1000.90,920.89 L1003.73,921.31 L1006.56,921.73 L1009.38,922.15 L1012.21,922.56 L1015.04,922.97 L1017.86,923.38 L1020.69,923.79 L1023.52,924.19 L1026.34,924.60 L1029.17,925.00 L1031.99,925.39 L1034.82,925.79 L1037.65,926.18 L1040.47,926.57 L1043.30,926.96 L1046.13,927.35 L1048.95,927.73 L1051.78,928.11 L1054.61,928.49 L1057.43,928.87 L1060.26,929.25 L1063.09,929.62 L1065.91,929.99 L1068.74,930.36 L1071.56,930.73 L1074.39,931.09 L1077.22,931.45 L1080.04,931.81 L1082.87,932.17 L1085.70,932.53 L1088.52,932.88 L1091.35,933.24 L1094.18,933.59 L1097.00,933.93 L1099.83,934.28 L1102.65,934.62 L1105.48,934.97 L1108.31,935.31 L1111.13,935.64 L1113.96,935.98 L1116.79,936.31 L1119.61,936.65 L1122.44,936.98 L1125.27,937.31 L1128.09,937.63 L1130.92,937.96 L1133.75,938.28 L1136.57,938.60 L1139.40,938.92 L1142.22,939.24 L1145.05,939.55 L1147.88,939.87 L1150.70,940.18 L1153.53,940.49 L1156.36,940.80 L1159.18,941.10 L1162.01,941.41 L1164.84,941.71 L1167.66,942.01 L1170.49,942.31 L1173.31,942.61 L1176.14,942.91 L1178.97,943.20 L1181.79,943.49 L1184.62,943.78 L1187.45,944.07 L1190.27,944.36 L1193.10,944.65 L1195.93,944.93 L1198.75,945.21 L1201.58,945.50 L1204.41,945.78 L1207.23,946.05 L1210.06,946.33 L1212.88,946.60 L1215.71,946.88 L1218.54,947.15 L1221.36,947.42 L1224.19,947.69 L1227.02,947.95 L1229.84,948.22 L1232.67,948.48 L1235.50,948.74 L1238.32,949.01 L1241.15,949.26 L1243.97,949.52 L1246.80,949.78 L1249.63,950.03 L1252.45,950.29 L1255.28,950.54 L1258.11,950.79 L1260.93,951.04 L1263.76,951.29 L1266.59,951.53 L1269.41,951.78 L1272.24,952.02 L1275.07,952.26 L1277.89,952.50 L1280.72,952.74 L1283.54,952.98 L1286.37,953.21 L1289.20,953.45 L1292.02,953.68 L1294.85,953.91 L1297.68,954.15 L1300.50,954.38 L1303.33,954.60 L1306.16,954.83 L1308.98,955.06 L1311.81,955.28 L1314.63,955.50 L1317.46,955.72 L1320.29,955.95 L1323.11,956.16 L1325.94,956.38 L1328.77,956.60 L1331.59,956.81 L1334.42,957.03 L1337.25,957.24 L1340.07,957.45 L1342.90,957.66 L1345.73,957.87 L1348.55,958.08 L1351.38,958.29 L1354.20,958.49 L1357.03,958.70 L1359.86,958.90 L1362.68,959.10 L1365.51,959.30 L1368.34,959.50 L1371.16,959.70 L1373.99,959.90 L1376.82,960.10 L1379.64,960.29 L1382.47,960.49 L1385.29,960.68 L1388.12,960.87 L1390.95,961.06 L1393.77,961.25 L1396.60,961.44 L1399.43,961.63 L1402.25,961.81 L1405.08,962.00 L1407.91,962.18 L1410.73,962.37 L1413.56,962.55 L1416.39,962.73 L1419.21,962.91 L1422.04,963.09 L1424.86,963.27 L1427.69,963.44 L1430.52,963.62 L1433.34,963.79 L1436.17,963.97 L1439.00,964.14 L1441.82,964.31 L1444.65,964.48 L1447.48,964.65 L1450.30,964.82 L1453.13,964.99 L1455.95,965.16 L1458.78,965.32 L1461.61,965.49 L1464.43,965.65 L1467.26,965.82 L1470.09,965.98 L1472.91,966.14 L1475.74,966.30 L1478.57,966.46 L1481.39,966.62 L1484.22,966.78 L1487.05,966.93 L1489.87,967.09 L1492.70,967.24 L1495.52,967.40 L1498.35,967.55 L1501.18,967.70 L1504.00,967.85 L1506.83,968.00 L1509.66,968.15 L1512.48,968.30 L1515.31,968.45 L1518.14,968.60 L1520.96,968.74 L1523.79,968.89 L1526.61,969.03 L1529.44,969.18 L1532.27,969.32 L1535.09,969.46 L1537.92,969.60 L1540.75,969.74 L1543.57,969.88 L1546.40,970.02 L1549.23,970.16 L1552.05,970.30 L1554.88,970.43 L1557.71,970.57 L1560.53,970.70 L1563.36,970.84 L1566.18,970.97 L1569.01,971.10 L1571.84,971.24 L1574.66,971.37 L1577.49,971.50 L1580.32,971.63 L1583.14,971.76 L1585.97,971.88 L1588.80,972.01 L1591.62,972.14 L1594.45,972.26 L1597.27,972.39 L1600.10,972.51 L1602.93,972.64 L1605.75,972.76 L1608.58,972.88 L1611.41,973.00 L1614.23,973.12 L1617.06,973.24 L1619.89,973.36 L1622.71,973.48 L1625.54,973.60 L1628.37,973.72 L1631.19,973.83 L1634.02,973.95 L1636.84,974.07 L1639.67,974.18 L1642.50,974.29 L1645.32,974.41 L1648.15,974.52 L1650.98,974.63 L1653.80,974.74 L1656.63,974.85 L1659.46,974.96 L1662.28,975.07 L1665.11,975.18 L1667.93,975.29 L1670.76,975.40 L1673.59,975.51 L1676.41,975.61 L1679.24,975.72 L1682.07,975.82 L1684.89,975.93 L1687.72,976.03 L1690.55,976.13 L1693.37,976.24 L1696.20,976.34 L1699.03,976.44 L1701.85,976.54 L1704.68,976.64 L1707.50,976.74 L1710.33,976.84 L1713.16,976.94 L1715.98,977.04 L1718.81,977.14 L1721.64,977.23 L1724.46,977.33 L1727.29,977.42 L1730.12,977.52 L1732.94,977.61 L1735.77,977.71 L1738.59,977.80 L1741.42,977.90 L1744.25,977.99 L1747.07,978.08 L1749.90,978.17 L1752.73,978.26 L1755.55,978.35 L1758.38,978.44 L1761.21,978.53 L1764.03,978.62 L1766.86,978.71 L1769.69,978.80 L1772.51,978.89 L1775.34,978.97 L1778.16,979.06 L1780.99,979.14 L1783.82,979.23 L1786.64,979.31 L1789.47,979.40 L1792.30,979.48 L1795.12,979.57 L1797.95,979.65 L1800.78,979.73 L1803.60,979.81 L1806.43,979.90 L1809.25,979.98 L1812.08,980.06 L1814.91,980.14 L1817.73,980.22 L1820.56,980.30 L1823.39,980.37 L1824.80,980.41" stroke="#ecb120"/>
<path d="M411.60,256.32 L411.74,259.00 L411.88,261.66 L412.02,264.29 L412.17,266.90 L412.31,269.47 L412.45,272.02 L412.59,274.55 L412.73,277.05 L412.87,279.52 L413.01,281.97 L413.15,284.39 L413.30,286.79 L413.44,289.16 L413.58,291.51 L413.72,293.83 L413.86,296.13 L414.00,298.41 L414.14,300.66 L414.29,302.89 L414.43,305.10 L414.57,307.29 L414.71,309.45 L414.85,311.59 L414.99,313.71 L415.13,315.81 L415.27,317.89 L415.42,319.95 L415.56,321.98 L415.70,324.00 L415.84,325.99 L416.12,329.92 L416.40,333.78 L416.69,337.55 L416.97,341.25 L417.25,344.88 L417.54,348.44 L417.82,351.93 L418.10,355.35 L418.38,358.70 L418.67,361.99 L418.95,365.21 L419.23,368.37 L419.51,371.47 L419.80,374.51 L420.08,377.50 L420.36,380.42 L420.64,383.30 L420.93,386.11 L421.21,388.88 L421.49,391.59 L421.78,394.25 L422.06,396.86 L422.34,399.42 L422.62,401.94 L422.91,404.41 L423.19,406.83 L423.47,409.21 L423.75,411.55 L424.04,413.84 L424.32,416.09 L424.60,418.31 L424.88,420.48 L425.17,422.61 L425.45,424.71 L425.73,426.77 L426.01,428.79 L426.30,430.78 L426.72,433.70 L427.15,436.54 L427.57,439.31 L427.99,442.00 L428.42,444.63 L428.84,447.20 L429.27,449.70 L429.69,452.14 L430.11,454.52 L430.54,456.84 L430.96,459.11 L431.38,461.32 L431.81,463.48 L432.23,465.59 L432.66,467.65 L433.08,469.67 L433.50,471.64 L434.07,474.19 L434.64,476.67 L435.20,479.08 L435.77,481.42 L436.33,483.70 L436.90,485.91 L437.46,488.06 L438.03,490.15 L438.59,492.19 L439.16,494.17 L439.72,496.10 L441.28,501.17 L442.69,505.49 L444.10,509.56 L445.52,513.42 L446.93,517.07 L448.34,520.54 L449.76,523.85 L451.17,527.01 L452.58,530.04 L454.00,532.94 L455.41,535.74 L456.82,538.43 L458.24,541.02 L459.65,543.54 L461.06,545.97 L462.48,548.33 L463.89,550.62 L465.30,552.86 L466.71,555.03 L468.13,557.15 L469.54,559.22 L470.95,561.25 L472.37,563.23 L473.78,565.17 L475.19,567.07 L476.61,568.94 L478.02,570.77 L479.43,572.57 L480.85,574.34 L482.26,576.07 L483.67,577.78 L485.09,579.47 L486.50,581.12 L487.91,582.75 L489.33,584.36 L490.74,585.94 L492.15,587.50 L493.57,589.04 L494.98,590.55 L496.39,592.05 L497.81,593.52 L499.22,594.98 L500.63,596.42 L502.04,597.83 L504.87,600.61 L507.70,603.33 L510.52,605.97 L513.35,608.55 L516.18,611.06 L519.00,613.52 L521.83,615.92 L524.66,618.26 L527.48,620.55 L530.31,622.78 L533.14,624.96 L535.96,627.09 L538.79,629.18 L541.61,631.21 L544.44,633.20 L547.27,635.15 L550.09,637.05 L552.92,638.91 L555.75,640.73 L558.57,642.51 L561.40,644.25 L564.23,645.95 L567.05,647.61 L569.88,649.24 L572.70,650.84 L575.53,652.39 L578.36,653.92 L581.18,655.42 L584.01,656.88 L586.84,658.31 L589.66,659.71 L592.49,661.09 L595.32,662.43 L598.14,663.75 L600.97,665.04 L603.80,666.30 L606.62,667.54 L609.45,668.76 L612.27,669.95 L615.10,671.11 L617.93,672.26 L620.75,673.38 L623.58,674.48 L626.41,675.56 L629.23,676.62 L632.06,677.65 L634.89,678.67 L637.71,679.67 L640.54,680.65 L643.36,681.62 L646.19,682.56 L649.02,683.49 L651.84,684.40 L654.67,685.30 L657.50,686.18 L660.32,687.04 L663.15,687.89 L665.98,688.73 L668.80,689.55 L671.63,690.35 L674.46,691.14 L677.28,691.92 L680.11,692.69 L682.93,693.45 L685.76,694.19 L688.59,694.92 L691.41,695.64 L694.24,696.34 L697.07,697.04 L699.89,697.72 L702.72,698.40 L705.55,699.06 L708.37,699.72 L711.20,700.36 L714.02,701.00 L716.85,701.62 L719.68,702.24 L722.50,702.85 L725.33,703.45 L728.16,704.04 L730.98,704.62 L733.81,705.20 L736.64,705.77 L739.46,706.32 L742.29,706.88 L745.12,707.42 L747.94,707.96 L750.77,708.49 L753.59,709.02 L756.42,709.53 L759.25,710.05 L762.07,710.55 L764.90,711.05 L767.73,711.54 L770.55,712.03 L773.38,712.51 L776.21,712.99 L779.03,713.46 L781.86,713.93 L784.68,714.39 L787.51,714.84 L790.34,715.30 L793.16,715.74 L795.99,716.18 L798.82,716.62 L801.64,717.05 L804.47,717.48 L807.30,717.90 L810.12,718.32 L812.95,718.74 L815.78,719.15 L818.60,719.56 L821.43,719.96 L824.25,720.36 L827.08,720.76 L829.91,721.15 L832.73,721.54 L835.56,721.93 L838.39,722.31 L841.21,722.69 L844.04,723.06 L846.87,723.44 L849.69,723.81 L852.52,724.17 L855.34,724.54 L858.17,724.90 L861.00,725.26 L863.82,725.61 L866.65,725.97 L869.48,726.32 L872.30,726.66 L875.13,727.01 L877.96,727.35 L880.78,727.69 L883.61,728.03 L886.44,728.37 L889.26,728.70 L892.09,729.03 L894.91,729.36 L897.74,729.69 L900.57,730.01 L903.39,730.33 L906.22,730.65 L909.05,730.97 L911.87,731.29 L914.70,731.60 L917.53,731.91 L920.35,732.23 L923.18,732.53 L926.00,732.84 L928.83,733.15 L931.66,733.45 L934.48,733.75 L937.31,734.05 L940.14,734.35 L942.96,734.65 L945.79,734.94 L948.62,735.24 L951.44,735.53 L954.27,735.82 L957.10,736.11 L959.92,736.40 L962.75,736.69 L965.57,736.97 L968.40,737.25 L971.23,737.54 L974.05,737.82 L976.88,738.10 L979.71,738.38 L982.53,738.65 L985.36,738.93 L988.19,739.20 L991.01,739.48 L993.84,739.75 L996.66,740.02 L999.49,740.29 L1002.32,740.56 L1005.14,740.83 L1007.97,741.09 L1010.80,741.36 L1013.62,741.62 L1016.45,741.88 L1019.28,742.15 L1022.10,742.41 L1024.93,742.67 L1027.76,742.92 L1030.58,743.18 L1033.41,743.44 L1036.23,743.70 L1039.06,743.95 L1041.89,744.20 L1044.71,744.46 L1047.54,744.71 L1050.37,744.96 L1053.19,745.21 L1056.02,745.46 L1058.85,745.71 L1061.67,745.95 L1064.50,746.20 L1067.32,746.45 L1070.15,746.69 L1072.98,746.93 L1075.80,747.18 L1078.63,747.42 L1081.46,747.66 L1084.28,747.90 L1087.11,748.14 L1089.94,748.38 L1092.76,748.62 L1095.59,748.85 L1098.42,749.09 L1101.24,749.33 L1104.07,749.56 L1106.89,749.79 L1109.72,750.03 L1112.55,750.26 L1115.37,750.49 L1118.20,750.72 L1121.03,750.95 L1123.85,751.18 L1126.68,751.41 L1129.51,751.64 L1132.33,751.87 L1135.16,752.09 L1137.98,752.32 L1140.81,752.55 L1143.64,752.77 L1146.46,752.99 L1149.29,753.22 L1152.12,753.44 L1154.94,753.66 L1157.77,753.88 L1160.60,754.10 L1163.42,754.32 L1166.25,754.54 L1169.08,754.76 L1171.90,754.98 L1174.73,755.20 L1177.55,755.41 L1180.38,755.63 L1183.21,755.84 L1186.03,756.06 L1188.86,756.27 L1191.69,756.49 L1194.51,756.70 L1197.34,756.91 L1200.17,757.12 L1202.99,757.33 L1205.82,757.55 L1208.64,757.76 L1211.47,757.96 L1214.30,758.17 L1217.12,758.38 L1219.95,758.59 L1222.78,758.80 L1225.60,759.00 L1228.43,759.21 L1231.26,759.41 L1234.08,759.62 L1236.91,759.82 L1239.74,760.03 L1242.56,760.23 L1245.39,760.43 L1248.21,760.63 L1251.04,760.83 L1253.87,761.03 L1256.69,761.23 L1259.52,761.43 L1262.35,761.63 L1265.17,761.83 L1268.00,762.03 L1270.83,762.23 L1273.65,762.42 L1276.48,762.62 L1279.30,762.82 L1282.13,763.01 L1284.96,763.21 L1287.78,763.40 L1290.61,763.59 L1293.44,763.79 L1296.26,763.98 L1299.09,764.17 L1301.92,764.36 L1304.74,764.56 L1307.57,764.75 L1310.40,764.94 L1313.22,765.13 L1316.05,765.31 L1318.87,765.50 L1321.70,765.69 L1324.53,765.88 L1327.35,766.07 L1330.18,766.25 L1333.01,766.44 L1335.83,766.63 L1338.66,766.81 L1341.49,766.99 L1344.31,767.18 L1347.14,767.36 L1349.96,767.55 L1352.79,767.73 L1355.62,767.91 L1358.44,768.09 L1361.27,768.27 L1364.10,768.46 L1366.92,768.64 L1369.75,768.82 L1372.58,769.00 L1375.40,769.17 L1378.23,769.35 L1381.06,769.53 L1383.88,769.71 L1386.71,769.89 L1389.53,770.06 L1392.36,770.24 L1395.19,770.41 L1398.01,770.59 L1400.84,770.76 L1403.67,770.94 L1406.49,771.11 L1409.32,771.29 L1412.15,771.46 L1414.97,771.63 L1417.80,771.80 L1420.62,771.98 L1423.45,772.15 L1426.28,772.32 L1429.10,772.49 L1431.93,772.66 L1434.76,772.83 L1437.58,773.00 L1440.41,773.17 L1443.24,773.33 L1446.06,773.50 L1448.89,773.67 L1451.72,773.84 L1454.54,774.00 L1457.37,774.17 L1460.19,774.33 L1463.02,774.50 L1465.85,774.66 L1468.67,774.83 L1471.50,774.99 L1474.33,775.16 L1477.15,775.32 L1479.98,775.48 L1482.81,775.64 L1485.63,775.81 L1488.46,775.97 L1491.28,776.13 L1494.11,776.29 L1496.94,776.45 L1499.76,776.61 L1502.59,776.77 L1505.42,776.93 L1508.24,777.09 L1511.07,777.24 L1513.90,777.40 L1516.72,777.56 L1519.55,777.72 L1522.38,777.87 L1525.20,778.03 L1528.03,778.18 L1530.85,778.34 L1533.68,778.49 L1536.51,778.65 L1539.33,778.80 L1542.16,778.96 L1544.99,779.11 L1547.81,779.26 L1550.64,779.42 L1553.47,779.57 L1556.29,779.72 L1559.12,779.87 L1561.94,780.02 L1564.77,780.17 L1567.60,780.32 L1570.42,780.47 L1573.25,780.62 L1576.08,780.77 L1578.90,780.92 L1581.73,781.07 L1584.56,781.22 L1587.38,781.36 L1590.21,781.51 L1593.04,781.66 L1595.86,781.81 L1598.69,781.95 L1601.51,782.10 L1604.34,782.24 L1607.17,782.39 L1609.99,782.53 L1612.82,782.68 L1615.65,782.82 L1618.47,782.96 L1621.30,783.11 L1624.13,783.25 L1626.95,783.39 L1629.78,783.53 L1632.60,783.68 L1635.43,783.82 L1638.26,783.96 L1641.08,784.10 L1643.91,784.24 L1646.74,784.38 L1649.56,784.52 L1652.39,784.66 L1655.22,784.80 L1658.04,784.94 L1660.87,785.07 L1663.70,785.21 L1666.52,785.35 L1669.35,785.49 L1672.17,785.62 L1675.00,785.76 L1677.83,785.90 L1680.65,786.03 L1683.48,786.17 L1686.31,786.30 L1689.13,786.44 L1691.96,786.57 L1694.79,786.71 L1697.61,786.84 L1700.44,786.97 L1703.26,787.11 L1706.09,787.24 L1708.92,787.37 L1711.74,787.50 L1714.57,787.63 L1717.40,787.77 L1720.22,787.90 L1723.05,788.03 L1725.88,788.16 L1728.70,788.29 L1731.53,788.42 L1734.36,788.55 L1737.18,788.68 L1740.01,788.80 L1742.83,788.93 L1745.66,789.06 L1748.49,789.19 L1751.31,789.32 L1754.14,789.44 L1756.97,789.57 L1759.79,789.70 L1762.62,789.82 L1765.45,789.95 L1768.27,790.07 L1771.10,790.20 L1773.92,790.32 L1776.75,790.45 L1779.58,790.57 L1782.40,790.70 L1785.23,790.82 L1788.06,790.94 L1790.88,791.07 L1793.71,791.19 L1796.54,791.31 L1799.36,791.43 L1802.19,791.55 L1805.02,791.68 L1807.84,791.80 L1810.67,791.92 L1813.49,792.04 L1816.32,792.16 L1819.15,792.28 L1821.97,792.40 L1824.80,792.52" stroke="#8018d0"/>
<path d="M411.60,256.32 L412.02,258.35 L412.45,260.37 L412.87,262.39 L413.30,264.40 L413.72,266.41 L414.14,268.41 L414.57,270.41 L414.99,272.40 L415.42,274.38 L415.84,276.36 L416.26,278.34 L416.69,280.31 L417.11,282.27 L417.54,284.23 L418.10,286.83 L418.67,289.43 L419.23,292.01 L419.80,294.59 L420.36,297.15 L420.93,299.71 L421.49,302.25 L422.06,304.79 L422.62,307.32 L423.19,309.84 L423.75,312.35 L424.32,314.85 L424.88,317.34 L425.45,319.83 L426.01,322.30 L426.58,324.76 L427.15,327.22 L427.71,329.67 L428.28,332.11 L428.84,334.54 L429.41,336.96 L429.97,339.37 L430.54,341.77 L431.10,344.17 L431.67,346.55 L432.23,348.93 L432.80,351.30 L433.36,353.66 L433.93,356.01 L434.49,358.35 L435.06,360.68 L435.62,363.01 L436.19,365.33 L436.75,367.64 L437.32,369.94 L437.89,372.23 L438.45,374.51 L439.02,376.79 L439.58,379.05 L441.28,385.81 L442.69,391.38 L444.10,396.90 L445.52,402.37 L446.93,407.79 L448.34,413.16 L449.76,418.48 L451.17,423.76 L452.58,428.99 L454.00,434.17 L455.41,439.30 L456.82,444.39 L458.24,449.43 L459.65,454.42 L461.06,459.37 L462.48,464.28 L463.89,469.14 L465.30,473.96 L466.71,478.73 L468.13,483.46 L469.54,488.15 L470.95,492.79 L472.37,497.39 L473.78,501.96 L475.19,506.48 L476.61,510.95 L478.02,515.39 L479.43,519.79 L480.85,524.15 L482.26,528.47 L483.67,532.75 L485.09,536.99 L486.50,541.19 L487.91,545.36 L489.33,549.48 L490.74,553.57 L492.15,557.63 L493.57,561.64 L494.98,565.62 L496.39,569.57 L497.81,573.47 L499.22,577.35 L500.63,581.18 L502.04,584.99 L503.46,588.76 L504.87,592.49 L506.28,596.19 L507.70,599.86 L509.11,603.49 L510.52,607.09 L511.94,610.66 L513.35,614.20 L514.76,617.70 L516.18,621.17 L517.59,624.61 L519.00,628.02 L520.42,631.40 L521.83,634.75 L523.24,638.07 L524.66,641.36 L526.07,644.62 L527.48,647.84 L528.90,651.04 L530.31,654.21 L531.72,657.36 L533.14,660.47 L534.55,663.56 L535.96,666.61 L537.37,669.64 L538.79,672.64 L540.20,675.62 L541.61,678.57 L543.03,681.49 L544.44,684.38 L545.85,687.25 L547.27,690.10 L548.68,692.91 L550.09,695.71 L551.51,698.47 L552.92,701.21 L554.33,703.93 L555.75,706.62 L557.16,709.29 L558.57,711.93 L559.99,714.55 L561.40,717.15 L562.81,719.72 L564.23,722.27 L565.64,724.80 L567.05,727.30 L568.47,729.78 L569.88,732.24 L571.29,734.67 L572.70,737.09 L574.12,739.48 L575.53,741.85 L576.94,744.20 L578.36,746.53 L579.77,748.83 L581.18,751.12 L582.60,753.38 L584.01,755.63 L585.42,757.85 L586.84,760.06 L588.25,762.24 L589.66,764.40 L591.08,766.55 L592.49,768.67 L593.90,770.78 L595.32,772.87 L596.73,774.94 L598.14,776.99 L599.56,779.02 L600.97,781.03 L602.38,783.02 L603.80,785.00 L605.21,786.96 L606.62,788.90 L608.03,790.82 L609.45,792.73 L610.86,794.62 L612.27,796.49 L613.69,798.34 L615.10,800.18 L616.51,802.00 L617.93,803.80 L619.34,805.59 L620.75,807.36 L622.17,809.12 L623.58,810.86 L624.99,812.58 L626.41,814.29 L627.82,815.99 L629.23,817.66 L630.65,819.33 L632.06,820.98 L633.47,822.61 L634.89,824.23 L636.30,825.83 L637.71,827.42 L639.13,828.99 L640.54,830.55 L641.95,832.10 L643.36,833.63 L644.78,835.15 L646.19,836.65 L647.60,838.14 L649.02,839.62 L650.43,841.09 L651.84,842.54 L653.26,843.97 L654.67,845.40 L657.50,848.21 L660.32,850.97 L663.15,853.68 L665.98,856.34 L668.80,858.96 L671.63,861.52 L674.46,864.04 L677.28,866.52 L680.11,868.95 L682.93,871.33 L685.76,873.68 L688.59,875.98 L691.41,878.24 L694.24,880.46 L697.07,882.64 L699.89,884.78 L702.72,886.88 L705.55,888.94 L708.37,890.97 L711.20,892.96 L714.02,894.91 L716.85,896.83 L719.68,898.71 L722.50,900.56 L725.33,902.38 L728.16,904.16 L730.98,905.92 L733.81,907.64 L736.64,909.33 L739.46,910.99 L742.29,912.61 L745.12,914.21 L747.94,915.79 L750.77,917.33 L753.59,918.84 L756.42,920.33 L759.25,921.79 L762.07,923.22 L764.90,924.63 L767.73,926.02 L770.55,927.37 L773.38,928.71 L776.21,930.02 L779.03,931.30 L781.86,932.57 L784.68,933.81 L787.51,935.03 L790.34,936.22 L793.16,937.40 L795.99,938.55 L798.82,939.68 L801.64,940.79 L804.47,941.89 L807.30,942.96 L810.12,944.01 L812.95,945.04 L815.78,946.06 L818.60,947.06 L821.43,948.04 L824.25,949.00 L827.08,949.94 L829.91,950.87 L832.73,951.78 L835.56,952.67 L838.39,953.55 L841.21,954.41 L844.04,955.26 L846.87,956.09 L849.69,956.91 L852.52,957.71 L855.34,958.50 L858.17,959.27 L861.00,960.03 L863.82,960.77 L866.65,961.51 L869.48,962.22 L872.30,962.93 L875.13,963.62 L877.96,964.30 L880.78,964.97 L883.61,965.63 L886.44,966.27 L889.26,966.91 L892.09,967.53 L894.91,968.14 L897.74,968.74 L900.57,969.33 L903.39,969.90 L906.22,970.47 L909.05,971.03 L911.87,971.58 L914.70,972.11 L917.53,972.64 L920.35,973.16 L923.18,973.67 L926.00,974.17 L928.83,974.66 L931.66,975.14 L934.48,975.61 L937.31,976.08 L940.14,976.53 L942.96,976.98 L945.79,977.42 L948.62,977.85 L951.44,978.28 L954.27,978.69 L957.10,979.10 L959.92,979.51 L962.75,979.90 L965.57,980.29 L968.40,980.67 L971.23,981.04 L974.05,981.41 L976.88,981.77 L979.71,982.12 L982.53,982.47 L985.36,982.81 L988.19,983.15 L991.01,983.47 L993.84,983.80 L996.66,984.11 L999.49,984.43 L1002.32,984.73 L1005.14,985.03 L1007.97,985.33 L1010.80,985.62 L1013.62,985.90 L1016.45,986.18 L1019.28,986.45 L1022.10,986.72 L1024.93,986.99 L1027.76,987.25 L1030.58,987.50 L1033.41,987.75 L1036.23,988.00 L1039.06,988.24 L1041.89,988.48 L1044.71,988.71 L1047.54,988.94 L1050.37,989.16 L1053.19,989.38 L1056.02,989.60 L1058.85,989.81 L1061.67,990.02 L1064.50,990.23 L1067.32,990.43 L1070.15,990.63 L1072.98,990.82 L1075.80,991.01 L1078.63,991.20 L1081.46,991.38 L1084.28,991.56 L1087.11,991.74 L1089.94,991.91 L1092.76,992.08 L1095.59,992.25 L1098.42,992.42 L1101.24,992.58 L1104.07,992.74 L1106.89,992.89 L1109.72,993.05 L1112.55,993.20 L1115.37,993.35 L1118.20,993.49 L1121.03,993.63 L1123.85,993.77 L1126.68,993.91 L1129.51,994.05 L1132.33,994.18 L1135.16,994.31 L1137.98,994.44 L1140.81,994.56 L1143.64,994.68 L1146.46,994.81 L1149.29,994.92 L1152.12,995.04 L1154.94,995.16 L1157.77,995.27 L1160.60,995.38 L1163.42,995.49 L1166.25,995.59 L1169.08,995.70 L1171.90,995.80 L1174.73,995.90 L1177.55,996.00 L1180.38,996.10 L1183.21,996.19 L1186.03,996.29 L1188.86,996.38 L1191.69,996.47 L1194.51,996.56 L1197.34,996.65 L1200.17,996.73 L1202.99,996.82 L1205.82,996.90 L1208.64,996.98 L1211.47,997.06 L1214.30,997.14 L1217.12,997.21 L1219.95,997.29 L1222.78,997.36 L1225.60,997.44 L1228.43,997.51 L1231.26,997.58 L1234.08,997.65 L1236.91,997.71 L1239.74,997.78 L1242.56,997.85 L1245.39,997.91 L1248.21,997.97 L1251.04,998.03 L1253.87,998.10 L1256.69,998.15 L1259.52,998.21 L1262.35,998.27 L1265.17,998.33 L1268.00,998.38 L1270.83,998.44 L1273.65,998.49 L1276.48,998.54 L1279.30,998.59 L1282.13,998.64 L1284.96,998.69 L1287.78,998.74 L1290.61,998.79 L1293.44,998.84 L1296.26,998.88 L1299.09,998.93 L1301.92,998.97 L1304.74,999.02 L1307.57,999.06 L1310.40,999.10 L1313.22,999.14 L1316.05,999.18 L1318.87,999.22 L1321.70,999.26 L1324.53,999.30 L1327.35,999.34 L1330.18,999.38 L1333.01,999.41 L1335.83,999.45 L1338.66,999.48 L1341.49,999.52 L1344.31,999.55 L1347.14,999.59 L1349.96,999.62 L1352.79,999.65 L1355.62,999.68 L1358.44,999.71 L1361.27,999.74 L1364.10,999.77 L1366.92,999.80 L1369.75,999.83 L1372.58,999.86 L1375.40,999.89 L1378.23,999.92 L1381.06,999.94 L1383.88,999.97 L1386.71,999.99 L1389.53,1000.02 L1392.36,1000.04 L1395.19,1000.07 L1398.01,1000.09 L1400.84,1000.12 L1403.67,1000.14 L1406.49,1000.16 L1409.32,1000.18 L1412.15,1000.21 L1414.97,1000.23 L1417.80,1000.25 L1420.62,1000.27 L1423.45,1000.29 L1426.28,1000.31 L1429.10,1000.33 L1431.93,1000.35 L1434.76,1000.37 L1437.58,1000.39 L1440.41,1000.40 L1443.24,1000.42 L1446.06,1000.44 L1448.89,1000.46 L1451.72,1000.47 L1454.54,1000.49 L1457.37,1000.51 L1460.19,1000.52 L1463.02,1000.54 L1465.85,1000.55 L1468.67,1000.57 L1471.50,1000.59 L1474.33,1000.60 L1477.15,1000.61 L1479.98,1000.63 L1482.81,1000.64 L1485.63,1000.66 L1488.46,1000.67 L1491.28,1000.68 L1494.11,1000.70 L1496.94,1000.71 L1499.76,1000.72 L1502.59,1000.73 L1505.42,1000.74 L1508.24,1000.76 L1511.07,1000.77 L1513.90,1000.78 L1516.72,1000.79 L1519.55,1000.80 L1522.38,1000.81 L1525.20,1000.82 L1528.03,1000.83 L1530.85,1000.84 L1533.68,1000.85 L1536.51,1000.86 L1539.33,1000.87 L1542.16,1000.88 L1544.99,1000.89 L1547.81,1000.90 L1550.64,1000.91 L1553.47,1000.92 L1556.29,1000.93 L1559.12,1000.94 L1561.94,1000.94 L1564.77,1000.95 L1567.60,1000.96 L1570.42,1000.97 L1573.25,1000.98 L1576.08,1000.98 L1578.90,1000.99 L1581.73,1001.00 L1584.56,1001.01 L1587.38,1001.01 L1590.21,1001.02 L1593.04,1001.03 L1595.86,1001.03 L1598.69,1001.04 L1601.51,1001.05 L1604.34,1001.05 L1607.17,1001.06 L1609.99,1001.07 L1612.82,1001.07 L1615.65,1001.08 L1618.47,1001.08 L1621.30,1001.09 L1624.13,1001.09 L1626.95,1001.10 L1629.78,1001.11 L1632.60,1001.11 L1635.43,1001.12 L1638.26,1001.12 L1641.08,1001.13 L1643.91,1001.13 L1646.74,1001.14 L1649.56,1001.14 L1652.39,1001.15 L1655.22,1001.15 L1658.04,1001.15 L1660.87,1001.16 L1663.70,1001.16 L1666.52,1001.17 L1669.35,1001.17 L1672.17,1001.18 L1675.00,1001.18 L1677.83,1001.18 L1680.65,1001.19 L1683.48,1001.19 L1686.31,1001.20 L1689.13,1001.20 L1691.96,1001.20 L1694.79,1001.21 L1697.61,1001.21 L1700.44,1001.21 L1703.26,1001.22 L1706.09,1001.22 L1708.92,1001.22 L1711.74,1001.23 L1714.57,1001.23 L1717.40,1001.23 L1720.22,1001.24 L1723.05,1001.24 L1725.88,1001.24 L1728.70,1001.24 L1731.53,1001.25 L1734.36,1001.25 L1737.18,1001.25 L1740.01,1001.26 L1742.83,1001.26 L1745.66,1001.26 L1748.49,1001.26 L1751.31,1001.27 L1754.14,1001.27 L1756.97,1001.27 L1759.79,1001.27 L1762.62,1001.27 L1765.45,1001.28 L1768.27,1001.28 L1771.10,1001.28 L1773.92,1001.28 L1776.75,1001.29 L1779.58,1001.29 L1782.40,1001.29 L1785.23,1001.29 L1788.06,1001.29 L1790.88,1001.30 L1793.71,1001.30 L1796.54,1001.30 L1799.36,1001.30 L1802.19,1001.30 L1805.02,1001.30 L1807.84,1001.31 L1810.67,1001.31 L1813.49,1001.31 L1816.32,1001.31 L1819.15,1001.31 L1821.97,1001.31 L1824.80,1001.32" stroke="#3aaa35" stroke-dasharray="20.8 19.8"/>
</g>
<rect x="438.75" y="164" width="692.75" height="115.5" fill="#fff" stroke="#c8c8c8" stroke-width="1.6"/>
<rect x="1131.5" y="164" width="708.5" height="115.5" fill="#fff" stroke="#c8c8c8" stroke-width="1.6"/>
<text x="454" y="202.8" font-size="26" textLength="222.5" lengthAdjust="spacingAndGlyphs" fill="#262626" stroke="#262626" stroke-width="0.3">Bern-Standard 1996</text>
<text x="454" y="231.4" font-size="26" textLength="676.5" lengthAdjust="spacingAndGlyphs" fill="#262626" stroke="#262626" stroke-width="0.3">G(t) = a0 + a1*exp(-t/tau1) + a2*exp(-t/tau2) + a3*exp(-t/tau3)</text>
<text x="454" y="260.0" font-size="26" textLength="533" lengthAdjust="spacingAndGlyphs" fill="#262626" stroke="#262626" stroke-width="0.3">(a0=0.217; tau1=173 J, tau2=18.5 J, tau3=1.2 J)</text>
<text x="1146.3" y="202.8" font-size="26" textLength="114" lengthAdjust="spacingAndGlyphs" fill="#262626" stroke="#262626" stroke-width="0.3">Joos 2013</text>
<text x="1146.3" y="231.4" font-size="26" textLength="676.5" lengthAdjust="spacingAndGlyphs" fill="#262626" stroke="#262626" stroke-width="0.3">G(t) = a0 + a1*exp(-t/tau1) + a2*exp(-t/tau2) + a3*exp(-t/tau3)</text>
<text x="1146.3" y="260.0" font-size="26" textLength="547.5" lengthAdjust="spacingAndGlyphs" fill="#262626" stroke="#262626" stroke-width="0.3">(a0=0.2173; tau1=394 J, tau2=36.5 J, tau3=4.3 J)</text>
<rect x="1216.4" y="852.6" width="196.1" height="115.6" fill="#fff" stroke="#c8c8c8" stroke-width="1.6"/>
<text x="1231.4" y="891.5" font-size="26" textLength="70.5" lengthAdjust="spacingAndGlyphs" fill="#262626" stroke="#262626" stroke-width="0.3">Dietze</text>
<text x="1231.4" y="920.1" font-size="26" textLength="164" lengthAdjust="spacingAndGlyphs" fill="#262626" stroke="#262626" stroke-width="0.3">G(t) = exp(-t/T)</text>
<text x="1231.4" y="948.8" font-size="26" textLength="92" lengthAdjust="spacingAndGlyphs" fill="#262626" stroke="#262626" stroke-width="0.3">(T=55 J)</text>
<rect x="1414.7" y="370.9" width="297" height="136" fill="#fff" stroke="#666" stroke-width="1.5"/>
<path d="M1422.4,387.2H1496.8" stroke="#1170bd" stroke-width="5"/>
<text x="1502.5" y="396.2" font-size="23.2" textLength="202.07" lengthAdjust="spacingAndGlyphs" fill="#262626" stroke="#262626" stroke-width="0.3">Bern-Standard 1996</text>
<path d="M1422.4,413.2H1496.8" stroke="#d95300" stroke-width="5"/>
<text x="1502.5" y="421.5" font-size="23.2" textLength="135.35" lengthAdjust="spacingAndGlyphs" fill="#262626" stroke="#262626" stroke-width="0.3">Bern a0=0.10</text>
<path d="M1422.4,439.1H1496.8" stroke="#ecb120" stroke-width="5"/>
<text x="1502.5" y="447.2" font-size="23.2" textLength="135.35" lengthAdjust="spacingAndGlyphs" fill="#262626" stroke="#262626" stroke-width="0.3">Bern a0=0.01</text>
<path d="M1422.4,465.0H1496.8" stroke="#8018d0" stroke-width="5"/>
<text x="1502.5" y="473.3" font-size="23.2" textLength="103.53" lengthAdjust="spacingAndGlyphs" fill="#262626" stroke="#262626" stroke-width="0.3">Joos 2013</text>
<path d="M1422.4,490.8h20.8M1463.2,490.8h20.8" stroke="#3aaa35" stroke-width="5"/>
<text x="1502.5" y="498.9" font-size="23.2" textLength="63.59" lengthAdjust="spacingAndGlyphs" fill="#262626" stroke="#262626" stroke-width="0.3">Dietze</text>
<text x="411.90" y="1034.7" font-size="25.7" text-anchor="middle" textLength="13.63" lengthAdjust="spacingAndGlyphs" fill="#262626" stroke="#262626" stroke-width="0.3">0</text>
<text x="553.22" y="1034.7" font-size="25.7" text-anchor="middle" textLength="27.25" lengthAdjust="spacingAndGlyphs" fill="#262626" stroke="#262626" stroke-width="0.3">50</text>
<text x="694.54" y="1034.7" font-size="25.7" text-anchor="middle" textLength="40.88" lengthAdjust="spacingAndGlyphs" fill="#262626" stroke="#262626" stroke-width="0.3">100</text>
<text x="835.86" y="1034.7" font-size="25.7" text-anchor="middle" textLength="40.88" lengthAdjust="spacingAndGlyphs" fill="#262626" stroke="#262626" stroke-width="0.3">150</text>
<text x="977.18" y="1034.7" font-size="25.7" text-anchor="middle" textLength="40.88" lengthAdjust="spacingAndGlyphs" fill="#262626" stroke="#262626" stroke-width="0.3">200</text>
<text x="1118.50" y="1034.7" font-size="25.7" text-anchor="middle" textLength="40.88" lengthAdjust="spacingAndGlyphs" fill="#262626" stroke="#262626" stroke-width="0.3">250</text>
<text x="1259.82" y="1034.7" font-size="25.7" text-anchor="middle" textLength="40.88" lengthAdjust="spacingAndGlyphs" fill="#262626" stroke="#262626" stroke-width="0.3">300</text>
<text x="1401.14" y="1034.7" font-size="25.7" text-anchor="middle" textLength="40.88" lengthAdjust="spacingAndGlyphs" fill="#262626" stroke="#262626" stroke-width="0.3">350</text>
<text x="1542.46" y="1034.7" font-size="25.7" text-anchor="middle" textLength="40.88" lengthAdjust="spacingAndGlyphs" fill="#262626" stroke="#262626" stroke-width="0.3">400</text>
<text x="1683.78" y="1034.7" font-size="25.7" text-anchor="middle" textLength="40.88" lengthAdjust="spacingAndGlyphs" fill="#262626" stroke="#262626" stroke-width="0.3">450</text>
<text x="1825.10" y="1034.7" font-size="25.7" text-anchor="middle" textLength="40.88" lengthAdjust="spacingAndGlyphs" fill="#262626" stroke="#262626" stroke-width="0.3">500</text>
<text x="402.0" y="1011.00" font-size="25.7" text-anchor="end" textLength="13.63" lengthAdjust="spacingAndGlyphs" fill="#262626" stroke="#262626" stroke-width="0.3">0</text>
<text x="402.0" y="861.98" font-size="25.7" text-anchor="end" textLength="27.25" lengthAdjust="spacingAndGlyphs" fill="#262626" stroke="#262626" stroke-width="0.3">20</text>
<text x="402.0" y="712.97" font-size="25.7" text-anchor="end" textLength="27.25" lengthAdjust="spacingAndGlyphs" fill="#262626" stroke="#262626" stroke-width="0.3">40</text>
<text x="402.0" y="563.95" font-size="25.7" text-anchor="end" textLength="27.25" lengthAdjust="spacingAndGlyphs" fill="#262626" stroke="#262626" stroke-width="0.3">60</text>
<text x="402.0" y="414.93" font-size="25.7" text-anchor="end" textLength="27.25" lengthAdjust="spacingAndGlyphs" fill="#262626" stroke="#262626" stroke-width="0.3">80</text>
<text x="402.0" y="265.92" font-size="25.7" text-anchor="end" textLength="40.88" lengthAdjust="spacingAndGlyphs" fill="#262626" stroke="#262626" stroke-width="0.3">100</text>
<text x="402.0" y="116.90" font-size="25.7" text-anchor="end" textLength="40.88" lengthAdjust="spacingAndGlyphs" fill="#262626" stroke="#262626" stroke-width="0.3">120</text>
<text x="1119" y="99.2" font-size="27.5" text-anchor="middle" font-weight="bold" fill="#262626" stroke="#262626" stroke-width="0.3">Verbleib eines 100 GtC Pulses</text>
<text x="1118.5" y="1068.2" font-size="27.6" text-anchor="middle" fill="#262626" stroke="#262626" stroke-width="0.3">Zeit t [Jahre]</text>
<text x="0" y="0" font-size="27.4" text-anchor="middle" fill="#262626" stroke="#262626" stroke-width="0.3" transform="translate(346,553.6) rotate(-90)">Verbleibender CO2-Puls [GtC]</text>
<rect x="611" y="1124" width="48" height="48" rx="12" fill="#ffffff"/>
<rect x="692" y="1124" width="48" height="48" rx="12" fill="#ffffff"/>
<rect x="773" y="1124" width="48" height="48" rx="12" fill="#ffffff"/>
<rect x="854" y="1124" width="48" height="48" rx="12" fill="#ffffff"/>
<rect x="935" y="1124" width="48" height="48" rx="12" fill="#ffffff"/>
<rect x="1016" y="1124" width="48" height="48" rx="12" fill="#ffffff"/>
<rect x="1097" y="1124" width="48" height="48" rx="12" fill="#ffffff"/>
<rect x="1259" y="1124" width="48" height="48" rx="12" fill="#ffffff"/>
<path d="M643.87,1140.22 A12.1,12.1 0 0 0 642.51,1138.84" stroke="#ff4d56" stroke-width="5.9" fill="none"/>
<path d="M642.70,1139.01 A12.1,12.1 0 0 0 641.15,1137.83" stroke="#ff4a50" stroke-width="5.9" fill="none"/>
<path d="M641.37,1137.97 A12.1,12.1 0 0 0 639.68,1137.02" stroke="#ff4849" stroke-width="5.9" fill="none"/>
<path d="M639.90,1137.12 A12.1,12.1 0 0 0 638.10,1136.42" stroke="#ff4543" stroke-width="5.9" fill="none"/>
<path d="M638.34,1136.49 A12.1,12.1 0 0 0 636.45,1136.04" stroke="#ff433d" stroke-width="5.9" fill="none"/>
<path d="M636.70,1136.08 A12.1,12.1 0 0 0 634.77,1135.90" stroke="#ff4037" stroke-width="5.9" fill="none"/>
<path d="M635.02,1135.91 A12.1,12.1 0 0 0 633.08,1136.00" stroke="#ff4231" stroke-width="5.9" fill="none"/>
<path d="M633.34,1135.97 A12.1,12.1 0 0 0 631.43,1136.32" stroke="#ff4e2e" stroke-width="5.9" fill="none"/>
<path d="M631.67,1136.26 A12.1,12.1 0 0 0 629.83,1136.88" stroke="#ff5a2a" stroke-width="5.9" fill="none"/>
<path d="M630.07,1136.78 A12.1,12.1 0 0 0 628.33,1137.65" stroke="#ff6626" stroke-width="5.9" fill="none"/>
<path d="M628.55,1137.52 A12.1,12.1 0 0 0 626.95,1138.62" stroke="#ff7223" stroke-width="5.9" fill="none"/>
<path d="M627.15,1138.47 A12.1,12.1 0 0 0 625.72,1139.78" stroke="#ff7e1f" stroke-width="5.9" fill="none"/>
<path d="M625.90,1139.59 A12.1,12.1 0 0 0 624.66,1141.09" stroke="#ff8b1b" stroke-width="5.9" fill="none"/>
<path d="M624.81,1140.89 A12.1,12.1 0 0 0 623.80,1142.54" stroke="#ff9915" stroke-width="5.9" fill="none"/>
<path d="M623.92,1142.32 A12.1,12.1 0 0 0 623.15,1144.10" stroke="#ffa710" stroke-width="5.9" fill="none"/>
<path d="M623.23,1143.86 A12.1,12.1 0 0 0 622.71,1145.73" stroke="#ffb60a" stroke-width="5.9" fill="none"/>
<path d="M622.76,1145.48 A12.1,12.1 0 0 0 622.51,1147.41" stroke="#ffc405" stroke-width="5.9" fill="none"/>
<path d="M622.53,1147.16 A12.1,12.1 0 0 0 622.55,1149.10" stroke="#fdd100" stroke-width="5.9" fill="none"/>
<path d="M622.53,1148.84 A12.1,12.1 0 0 0 622.82,1150.76" stroke="#eccf05" stroke-width="5.9" fill="none"/>
<path d="M622.76,1150.52 A12.1,12.1 0 0 0 623.32,1152.38" stroke="#dacd0a" stroke-width="5.9" fill="none"/>
<path d="M623.23,1152.14 A12.1,12.1 0 0 0 624.04,1153.90" stroke="#c9cb0f" stroke-width="5.9" fill="none"/>
<path d="M623.92,1153.68 A12.1,12.1 0 0 0 624.96,1155.32" stroke="#b8c915" stroke-width="5.9" fill="none"/>
<path d="M624.81,1155.11 A12.1,12.1 0 0 0 626.07,1156.59" stroke="#a6c71a" stroke-width="5.9" fill="none"/>
<path d="M625.90,1156.41 A12.1,12.1 0 0 0 627.35,1157.69" stroke="#8ec525" stroke-width="5.9" fill="none"/>
<path d="M627.15,1157.53 A12.1,12.1 0 0 0 628.77,1158.60" stroke="#77c22f" stroke-width="5.9" fill="none"/>
<path d="M628.55,1158.48 A12.1,12.1 0 0 0 630.30,1159.31" stroke="#60c03a" stroke-width="5.9" fill="none"/>
<path d="M630.07,1159.22 A12.1,12.1 0 0 0 631.92,1159.80" stroke="#48bd45" stroke-width="5.9" fill="none"/>
<path d="M631.67,1159.74 A12.1,12.1 0 0 0 633.59,1160.06" stroke="#31bb4f" stroke-width="5.9" fill="none"/>
<path d="M633.34,1160.03 A12.1,12.1 0 0 0 635.28,1160.08" stroke="#1ab85a" stroke-width="5.9" fill="none"/>
<path d="M635.02,1160.09 A12.1,12.1 0 0 0 636.95,1159.87" stroke="#15b565" stroke-width="5.9" fill="none"/>
<path d="M636.70,1159.92 A12.1,12.1 0 0 0 638.58,1159.43" stroke="#15b272" stroke-width="5.9" fill="none"/>
<path d="M638.34,1159.51 A12.1,12.1 0 0 0 640.13,1158.76" stroke="#14ae7e" stroke-width="5.9" fill="none"/>
<path d="M639.90,1158.88 A12.1,12.1 0 0 0 641.57,1157.89" stroke="#14ab8a" stroke-width="5.9" fill="none"/>
<path d="M641.37,1158.03 A12.1,12.1 0 0 0 642.88,1156.82" stroke="#14a896" stroke-width="5.9" fill="none"/>
<path d="M642.70,1156.99 A12.1,12.1 0 0 0 644.03,1155.58" stroke="#15a4a3" stroke-width="5.9" fill="none"/>
<path d="M643.87,1155.78 A12.1,12.1 0 0 0 644.99,1154.20" stroke="#1a9fb4" stroke-width="5.9" fill="none"/>
<path d="M644.86,1154.41 A12.1,12.1 0 0 0 645.75,1152.69" stroke="#1f99c5" stroke-width="5.9" fill="none"/>
<path d="M645.65,1152.92 A12.1,12.1 0 0 0 646.30,1151.09" stroke="#2493d6" stroke-width="5.9" fill="none"/>
<path d="M646.23,1151.34 A12.1,12.1 0 0 0 646.61,1149.43" stroke="#298ee6" stroke-width="5.9" fill="none"/>
<path d="M646.58,1149.68 A12.1,12.1 0 0 0 646.70,1148.00" stroke="#2e88f6" stroke-width="5.9" fill="none"/>
<rect x="634.6" y="1144.9" width="15.05" height="5.8" fill="#3186ff"/>
<defs><linearGradient id="msgL" x1="0" y1="0" x2="0" y2="1"><stop offset="0" stop-color="#8aaefc"/><stop offset="1" stop-color="#5b8cfd"/></linearGradient><linearGradient id="opr" x1="0" y1="0" x2="0" y2="1"><stop offset="0" stop-color="#ff1b2d"/><stop offset="0.6" stop-color="#c8101f"/><stop offset="1" stop-color="#a70014"/></linearGradient><linearGradient id="opr2" x1="0" y1="0" x2="0" y2="1"><stop offset="0" stop-color="#8c0a13"/><stop offset="1" stop-color="#ff5252"/></linearGradient></defs>
<path d="M711,1134 H721 Q732,1134 732,1145.5 Q732,1157 721,1157 H716.2 V1163.8 L704.5,1152.5 Q700,1149 700,1145.5 Q700,1134 711,1134Z" fill="url(#msgL)"/>
<rect x="702.8" y="1138" width="26.4" height="14.8" rx="7.4" fill="#0655d3"/>
<ellipse cx="797" cy="1148.1" rx="17.4" ry="17.4" fill="url(#opr)"/>
<ellipse cx="799" cy="1148" rx="11.6" ry="14.6" fill="url(#opr2)"/>
<ellipse cx="797" cy="1147.9" rx="9" ry="12.5" fill="#ffffff"/>
<circle cx="870.4" cy="1142" r="8.8" fill="#4285f4"/>
<circle cx="885.4" cy="1146.6" r="4.4" fill="#ea4335"/>
<circle cx="885.4" cy="1157.6" r="5.2" fill="#fbbc05"/>
<circle cx="892" cy="1141.4" r="2.3" fill="#34a853"/>
<clipPath id="playc"><path d="M946.2,1137.5 Q946.2,1132.6 950.5,1135 L972.2,1146 Q975,1147.9 972.2,1149.8 L950.5,1160.8 Q946.2,1163.2 946.2,1158.3 Z"/></clipPath>
<g clip-path="url(#playc)">
<rect x="940" y="1128" width="40" height="40" fill="#4285f4"/>
<path d="M940,1128 L980,1128 L966.5,1141.2 L959.5,1147.9 Z" fill="#34a853"/>
<path d="M966.5,1141.2 L980,1128 L980,1168 L966.5,1154.6 L959.5,1147.9 Z" fill="#fbbc04"/>
<path d="M940,1168 L980,1168 L966.5,1154.6 L959.5,1147.9 Z" fill="#ea4335"/>
</g>
<path d="M1040,1131 A8.5,8.5 0 0 1 1040,1148Z" fill="#ea4335"/>
<path d="M1023,1148 A8.5,8.5 0 0 1 1040,1148Z" fill="#fbbc05"/>
<path d="M1040,1165 A8.5,8.5 0 0 1 1040,1148Z" fill="#34a853"/>
<path d="M1057,1148 A8.5,8.5 0 0 1 1040,1148Z" fill="#4285f4"/>
<rect x="1080.5" y="1126" width="1" height="55" fill="#f2f1f4"/>
<path d="M1106.28,1139.50 A17,17 0 0 1 1135.72,1139.50 L1121.00,1139.70 L1121,1148 L1113.81,1152.15 Z" fill="#dd3b2b"/>
<path d="M1135.72,1139.50 A17,17 0 0 1 1121.00,1165.00 L1128.19,1152.15 L1121,1148 L1121.00,1139.70 Z" fill="#fbbd1a"/>
<path d="M1121.00,1165.00 A17,17 0 0 1 1106.28,1139.50 L1113.81,1152.15 L1121,1148 L1128.19,1152.15 Z" fill="#239a44"/>
<circle cx="1121" cy="1148" r="8.4" fill="#ffffff"/>
<circle cx="1121" cy="1148" r="6.9" fill="#1d6fe6"/>
<clipPath id="jota"><rect x="1178" y="1124" width="48" height="48" rx="12"/></clipPath>
<g clip-path="url(#jota)">
<rect x="1178" y="1124" width="48" height="48" fill="#aee6fb"/>
<rect x="1178" y="1124" width="7.8" height="48" fill="#0d9bd0"/>
<text x="1188" y="1141.4" font-size="12.2" font-weight="bold" fill="#0f2a3f" textLength="31" lengthAdjust="spacingAndGlyphs">Jota+</text>
<text x="1192.6" y="1147.8" font-size="4.6" font-weight="bold" fill="#1e9ad6" textLength="25.8" lengthAdjust="spacingAndGlyphs">Text Editor</text>
<path d="M1188,1154.3 H1198" stroke="#2a9fd8" stroke-width="0.8"/>
<path d="M1191.5,1157.5 H1220 M1191.5,1161.1 H1220 M1191.5,1165.1 H1220 M1191.5,1168.8 H1220" stroke="#98d8f2" stroke-width="0.6"/>
<path d="M1200.5,1173 L1227,1147" stroke="#9ab0bc" stroke-width="3"/>
<path d="M1198.8,1171.7 L1225.2,1144.5" stroke="#2eaee6" stroke-width="3.4"/>
<path d="M1197,1173.5 L1200,1170.5" stroke="#a8a8a8" stroke-width="3"/>
</g>
<path d="M1270.9,1140.6 L1283.2,1150 L1295.3,1140.6" stroke="#ea4335" stroke-width="7.4" fill="none" stroke-linejoin="miter"/>
<path d="M1267.2,1141.5 V1157.5 Q1267.2,1159.7 1269.5,1159.7 H1274.6 V1147.3 Z" fill="#4285f4"/>
<path d="M1299.1,1141.5 V1157.5 Q1299.1,1159.7 1296.8,1159.7 H1291.6 V1147.3 Z" fill="#34a853"/>
<path d="M1267.2,1141.5 V1140.5 Q1267.2,1135.5 1272.5,1137.5 L1274.6,1139 V1147.3 Z" fill="#c5221f"/>
<path d="M1299.1,1141.5 V1140.5 Q1299.1,1135.5 1293.8,1137.5 L1291.6,1139 V1147.3 Z" fill="#fbbc04"/>
<rect x="1336.5" y="1125.5" width="56" height="56" rx="14" fill="#e6e5eb" stroke="#ecebf0" stroke-width="1.2"/>
<rect x="1344.5" y="1134" width="17" height="17" rx="5" fill="#b7c3f5"/>
<rect x="1367.5" y="1134" width="17" height="17" rx="5" fill="#b7c3f5"/>
<rect x="1344.5" y="1157" width="17" height="17" rx="5" fill="#b7c3f5"/>
<rect x="1367.5" y="1157" width="17" height="17" rx="5" fill="#b7c3f5"/>
</svg>
</body></html>
